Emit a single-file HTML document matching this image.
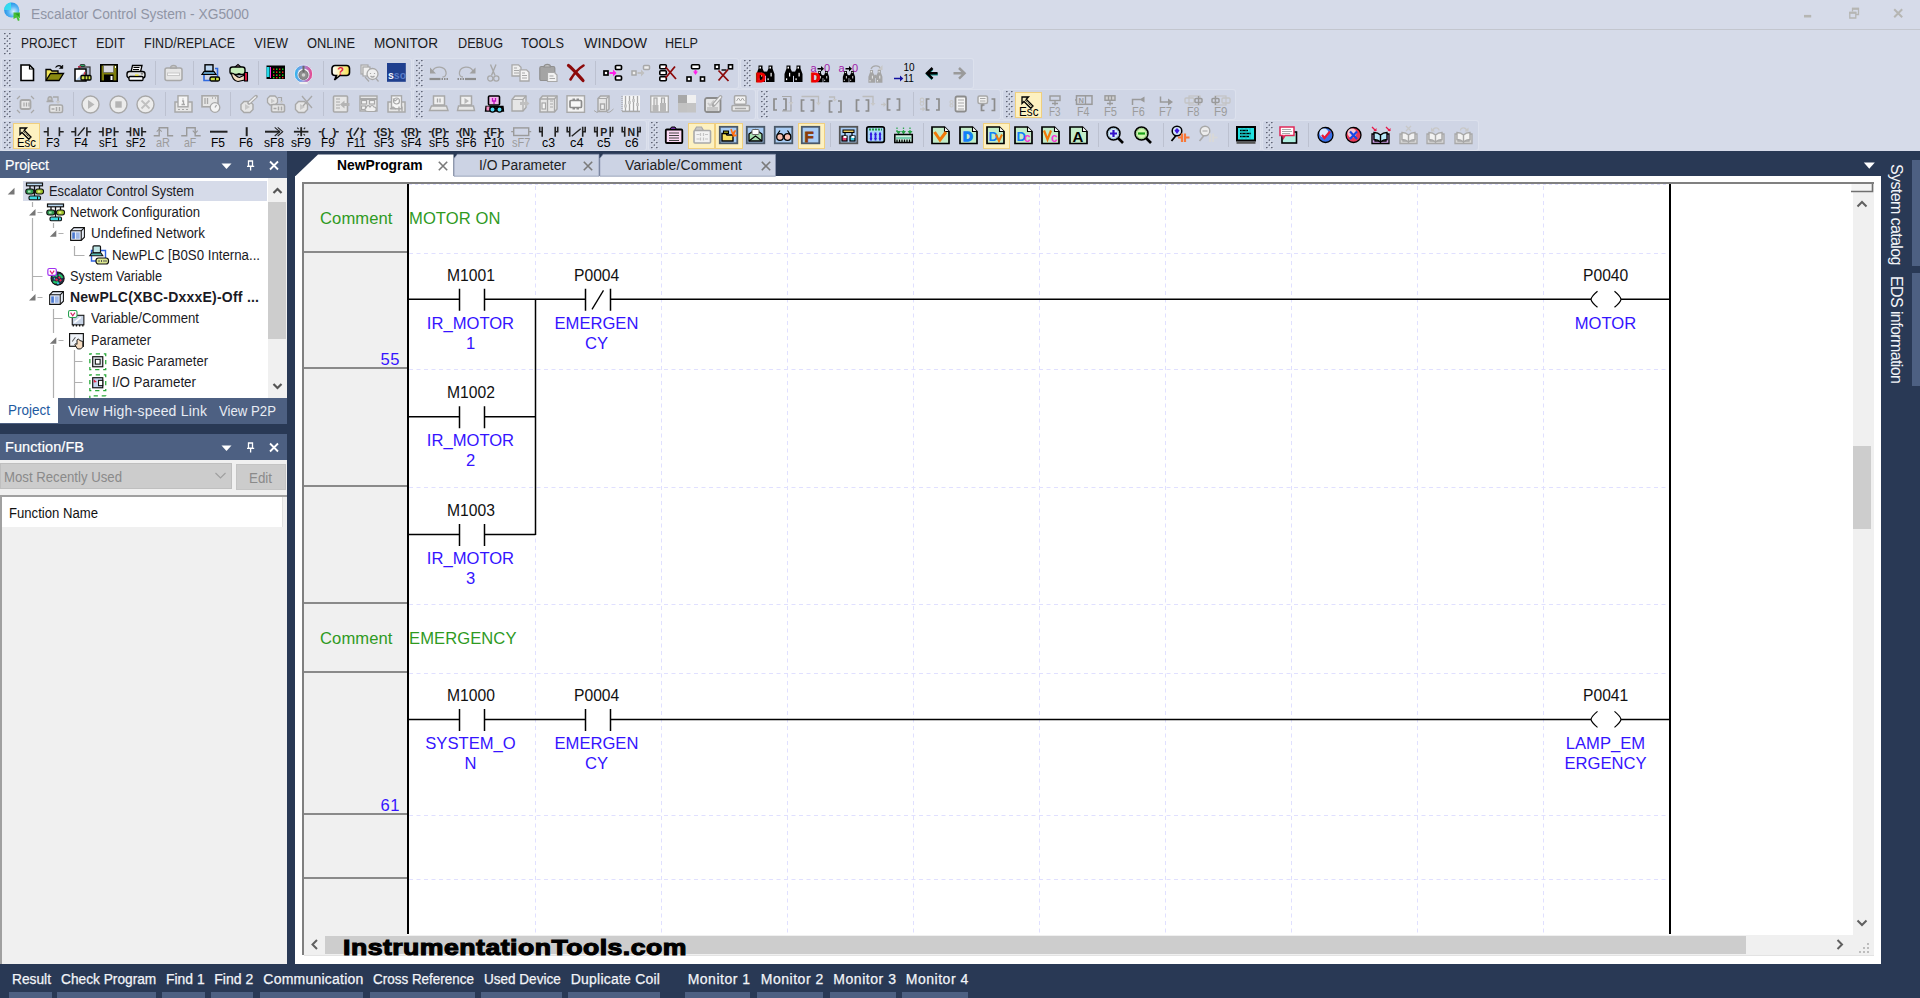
<!DOCTYPE html>
<html><head><meta charset="utf-8"><title>XG5000</title>
<style>
html,body{margin:0;padding:0;}
body{width:1920px;height:998px;overflow:hidden;background:#293955;position:relative;font-family:"Liberation Sans",sans-serif;}
.t{position:absolute;white-space:nowrap;}
.r{position:absolute;}
svg{position:absolute;overflow:visible;}
</style></head><body>
<div class="r" style="left:0px;top:0px;width:1920px;height:151px;background:#d6dbe9;"></div>
<div class="r" style="left:0px;top:29px;width:1920px;height:1px;background:#c3c6ce;"></div>
<span class="t" style="left:31.00px;top:7.15px;font-size:14px;line-height:14px;color:#9095a5;transform:scaleX(0.9831);transform-origin:0 0;">Escalator Control System - XG5000</span>
<svg style="left:2px;top:0px" width="22" height="24"><defs><radialGradient id="gl" cx=".62" cy=".6" r=".6"><stop offset="0" stop-color="#d8f0ff"/><stop offset=".55" stop-color="#58b4f4"/><stop offset="1" stop-color="#2494e8"/></radialGradient></defs><circle cx="9.700" cy="10" r="7.600" fill="url(#gl)"/><path d="M9 2.500v7.500h-7c.3-4 3-7 7-7.500z" fill="#34e4f0" opacity=".85"/><path d="M11.500 12.500h6.500v6l-1.800-1.800 1.500 3.500-1.700.8-1.600-3.500-2.900 1.500z" fill="#48c038"/><path d="M13 13.500h4v3z" fill="#2a9a2a"/></svg>
<svg style="left:1790px;top:0" width="130" height="28"><g stroke="#b6b6b3" fill="none"><path d="M14 16.200h7.200" stroke-width="2.600"/><path d="M62.500 11.500V8.500h6v6h-2.500" stroke-width="1.300"/><path d="M62 8.800h7" stroke-width="2"/><path d="M59.800 12.500h6v5.500h-6z" stroke-width="1.300"/><path d="M59.300 12.800h7" stroke-width="2"/><path d="M104.200 9.200l8 8M112.200 9.200l-8 8" stroke-width="2"/></g></svg>
<span class="t" style="left:21.00px;top:34.90px;font-size:15px;line-height:15px;color:#1b1b22;transform:scaleX(0.7999);transform-origin:0 0;">PROJECT</span>
<span class="t" style="left:96.00px;top:34.90px;font-size:15px;line-height:15px;color:#1b1b22;transform:scaleX(0.8488);transform-origin:0 0;">EDIT</span>
<span class="t" style="left:144.00px;top:34.90px;font-size:15px;line-height:15px;color:#1b1b22;transform:scaleX(0.8334);transform-origin:0 0;">FIND/REPLACE</span>
<span class="t" style="left:254.00px;top:34.90px;font-size:15px;line-height:15px;color:#1b1b22;transform:scaleX(0.8869);transform-origin:0 0;">VIEW</span>
<span class="t" style="left:307.00px;top:34.90px;font-size:15px;line-height:15px;color:#1b1b22;transform:scaleX(0.8595);transform-origin:0 0;">ONLINE</span>
<span class="t" style="left:374.00px;top:34.90px;font-size:15px;line-height:15px;color:#1b1b22;transform:scaleX(0.9071);transform-origin:0 0;">MONITOR</span>
<span class="t" style="left:458.00px;top:34.90px;font-size:15px;line-height:15px;color:#1b1b22;transform:scaleX(0.8436);transform-origin:0 0;">DEBUG</span>
<span class="t" style="left:521.00px;top:34.90px;font-size:15px;line-height:15px;color:#1b1b22;transform:scaleX(0.8502);transform-origin:0 0;">TOOLS</span>
<span class="t" style="left:584.00px;top:34.90px;font-size:15px;line-height:15px;color:#1b1b22;transform:scaleX(0.9572);transform-origin:0 0;">WINDOW</span>
<span class="t" style="left:665.00px;top:34.90px;font-size:15px;line-height:15px;color:#1b1b22;transform:scaleX(0.8422);transform-origin:0 0;">HELP</span>
<svg width="0" height="0"><defs><pattern id="gp" width="8" height="5" patternUnits="userSpaceOnUse"><rect x="0" y="0" width="1.600" height="1.200" fill="#5f6474"/><rect x="5" y="0" width="1.600" height="1.200" fill="#5f6474"/><rect x="2.700" y="2.300" width="1.200" height="1.600" fill="#5f6474"/><rect x="1.600" y="1.200" width="1" height="1" fill="#e8ebf3"/><rect x="6.600" y="1.200" width="1" height="1" fill="#e8ebf3"/><rect x="3.900" y="3.900" width="1" height="1" fill="#e8ebf3"/></pattern></defs></svg>
<div class="r" style="left:2px;top:59px;width:409px;height:29px;background:#cfd5e5;border-radius:2px;box-shadow:0 0 0 1px #dce1ed;"></div>
<div class="r" style="left:414px;top:59px;width:324px;height:29px;background:#cfd5e5;border-radius:2px;box-shadow:0 0 0 1px #dce1ed;"></div>
<div class="r" style="left:741px;top:59px;width:232px;height:29px;background:#cfd5e5;border-radius:2px;box-shadow:0 0 0 1px #dce1ed;"></div>
<div class="r" style="left:2px;top:90px;width:409px;height:29px;background:#cfd5e5;border-radius:2px;box-shadow:0 0 0 1px #dce1ed;"></div>
<div class="r" style="left:414px;top:90px;width:341px;height:29px;background:#cfd5e5;border-radius:2px;box-shadow:0 0 0 1px #dce1ed;"></div>
<div class="r" style="left:758px;top:90px;width:242px;height:29px;background:#cfd5e5;border-radius:2px;box-shadow:0 0 0 1px #dce1ed;"></div>
<div class="r" style="left:1003px;top:90px;width:232px;height:29px;background:#cfd5e5;border-radius:2px;box-shadow:0 0 0 1px #dce1ed;"></div>
<div class="r" style="left:2px;top:121px;width:644px;height:29px;background:#cfd5e5;border-radius:2px;box-shadow:0 0 0 1px #dce1ed;"></div>
<div class="r" style="left:649px;top:121px;width:611px;height:29px;background:#cfd5e5;border-radius:2px;box-shadow:0 0 0 1px #dce1ed;"></div>
<div class="r" style="left:1263px;top:121px;width:215px;height:29px;background:#cfd5e5;border-radius:2px;box-shadow:0 0 0 1px #dce1ed;"></div>
<svg style="left:4px;top:33px" width="8" height="22"><rect width="8" height="22" fill="url(#gp)"/></svg>
<svg style="left:4px;top:60px" width="8" height="27"><rect width="8" height="27" fill="url(#gp)"/></svg>
<svg style="left:416px;top:60px" width="8" height="27"><rect width="8" height="27" fill="url(#gp)"/></svg>
<svg style="left:744px;top:60px" width="8" height="27"><rect width="8" height="27" fill="url(#gp)"/></svg>
<svg style="left:4px;top:91px" width="8" height="27"><rect width="8" height="27" fill="url(#gp)"/></svg>
<svg style="left:416px;top:91px" width="8" height="27"><rect width="8" height="27" fill="url(#gp)"/></svg>
<svg style="left:761px;top:91px" width="8" height="27"><rect width="8" height="27" fill="url(#gp)"/></svg>
<svg style="left:1006px;top:91px" width="8" height="27"><rect width="8" height="27" fill="url(#gp)"/></svg>
<svg style="left:4px;top:122px" width="8" height="27"><rect width="8" height="27" fill="url(#gp)"/></svg>
<svg style="left:651px;top:122px" width="8" height="27"><rect width="8" height="27" fill="url(#gp)"/></svg>
<svg style="left:1266px;top:122px" width="8" height="27"><rect width="8" height="27" fill="url(#gp)"/></svg>
<div class="r" style="left:0px;top:151px;width:287px;height:27px;background:#4d6082;"></div>
<span class="t" style="left:5.00px;top:157.73px;font-size:14.5px;line-height:14.5px;color:#ffffff;transform:scaleX(0.9750);transform-origin:0 0;-webkit-text-stroke:0.2px #fff;">Project</span>
<svg style="left:218px;top:152px" width="70" height="26"><path d="M3.5 11.5h10l-5 5.5z" fill="#fff"/><g stroke="#fff" stroke-width="1.3" fill="none"><path d="M30.5 9h4v5.2h-4z M29 14.4h7.2 M32.6 14.4v4.2"/><path d="M52 9.5l8 8M60 9.5l-8 8" stroke-width="1.8"/></g></svg>
<div class="r" style="left:0px;top:178px;width:287px;height:220px;background:#ffffff;"></div>
<div class="r" style="left:268px;top:178px;width:19px;height:220px;background:#f0f0f0;"></div>
<div class="r" style="left:268px;top:201.5px;width:18px;height:137px;background:#cdcdcd;"></div>
<svg style="left:268px;top:178px" width="19" height="220"><g stroke="#555" stroke-width="2.200" fill="none"><path d="M5.500 15l4-4 4 4"/><path d="M5.500 206l4 4 4-4"/></g></svg>
<div class="r" style="left:23px;top:181px;width:244px;height:20px;background:#d6dbe9;"></div>
<div class="r" style="left:0px;top:398px;width:287px;height:26px;background:#4d6082;"></div>
<div class="r" style="left:0px;top:398px;width:58px;height:25px;background:#ffffff;"></div>
<span class="t" style="left:8.00px;top:403.15px;font-size:14px;line-height:14px;color:#1e5aa0;transform:scaleX(0.9639);transform-origin:0 0;">Project</span>
<span class="t" style="left:68.00px;top:404.15px;font-size:14px;line-height:14px;color:#e8ecf4;letter-spacing:0.202px;">View High-speed Link</span>
<span class="t" style="left:219.00px;top:404.15px;font-size:14px;line-height:14px;color:#e8ecf4;transform:scaleX(0.9430);transform-origin:0 0;">View P2P</span>
<div class="r" style="left:0px;top:433.5px;width:287px;height:27.5px;background:#4d6082;"></div>
<span class="t" style="left:5.00px;top:439.73px;font-size:14.5px;line-height:14.5px;color:#ffffff;letter-spacing:0.083px;-webkit-text-stroke:0.2px #fff;">Function/FB</span>
<svg style="left:218px;top:434px" width="70" height="26"><path d="M3.5 11.5h10l-5 5.5z" fill="#fff"/><g stroke="#fff" stroke-width="1.3" fill="none"><path d="M30.5 9h4v5.2h-4z M29 14.4h7.2 M32.6 14.4v4.2"/><path d="M52 9.5l8 8M60 9.5l-8 8" stroke-width="1.8"/></g></svg>
<div class="r" style="left:0px;top:460px;width:287px;height:504px;background:#f0f0f0;"></div>
<div class="r" style="left:0px;top:463px;width:232px;height:26px;background:#cccccc;border:1px solid #bfbfbf;box-sizing:border-box;"></div>
<span class="t" style="left:4.00px;top:469.65px;font-size:14px;line-height:14px;color:#8a8a8a;transform:scaleX(0.9420);transform-origin:0 0;">Most Recently Used</span>
<svg style="left:214px;top:470px" width="14" height="12"><path d="M1.5 3l5 5 5-5" stroke="#a0a0a0" stroke-width="1.2" fill="none"/></svg>
<div class="r" style="left:236px;top:464px;width:50px;height:26px;background:#cccccc;border:1px solid #c4c4c4;box-sizing:border-box;"></div>
<span class="t" style="left:249.00px;top:470.75px;font-size:14px;line-height:14px;color:#8a8a8a;transform:scaleX(0.9534);transform-origin:0 0;">Edit</span>
<div class="r" style="left:0px;top:495px;width:287px;height:2px;background:#a0a0a0;"></div>
<div class="r" style="left:0px;top:495px;width:2px;height:469px;background:#a0a0a0;"></div>
<div class="r" style="left:2px;top:497px;width:280px;height:30px;background:#ffffff;"></div>
<div class="r" style="left:282px;top:497px;width:1px;height:30px;background:#e0e0e0;"></div>
<span class="t" style="left:9.00px;top:505.95px;font-size:14px;line-height:14px;color:#111;transform:scaleX(0.9375);transform-origin:0 0;">Function Name</span>
<svg style="left:0;top:178px" width="268" height="220"><g stroke="#b0b0b0" stroke-width="1.200" fill="none"><path d="M32.500 24v5M32.500 40v73"/><path d="M53.500 45v5"/><path d="M37.500 34.500h5M58.500 55.500h5M74.500 68v9.500h10M32.500 98.500h10M37.500 119.500h5"/><path d="M53.500 131v24M53.500 167v53"/><path d="M53.500 140.500h9M58.500 162.500h5M74.500 172v48M74.500 183.500h8M74.500 204.500h8"/></g><g fill="#777"><path d="M14.500 9.800v6.800h-6.800z"/><path d="M35.500 31v6.500h-6.500z"/><path d="M56.300 52.200v6.500h-6.500z"/><path d="M35.500 116v6.500h-6.500z"/><path d="M56.300 159.200v6.500h-6.500z"/></g></svg>
<span class="t" style="left:49.00px;top:184.15px;font-size:14px;line-height:14px;color:#1a1a24;transform:scaleX(0.9181);transform-origin:0 0;">Escalator Control System</span>
<svg style="left:24.5px;top:182px" width="20" height="19"><rect x="1.500" y="1" width="16" height="2.800" fill="#b8d8f0" stroke="#111" stroke-width="1.200"/><path d="M5 4v3M14.500 4v3M9.500 4v10" stroke="#111" stroke-width="1.300"/><rect x=".8" y="7" width="8" height="5" rx="2.200" fill="#2f9a50" stroke="#111" stroke-width="1.100"/><rect x="3" y="8.500" width="2.600" height="2" fill="#a8e4b4"/><rect x="10.500" y="7" width="8" height="5" rx="2.200" fill="#9cc02c" stroke="#111" stroke-width="1.100"/><rect x="12.800" y="8.500" width="2.600" height="2" fill="#ecf488"/><rect x="4" y="14" width="11.500" height="3.800" rx="1.300" fill="#40d8e0" stroke="#111" stroke-width="1.100"/><path d="M12.500 14.500v3" stroke="#111" stroke-width="1"/></svg>
<span class="t" style="left:70.00px;top:205.15px;font-size:14px;line-height:14px;color:#1a1a24;transform:scaleX(0.9386);transform-origin:0 0;">Network Configuration</span>
<svg style="left:45.5px;top:203px" width="20" height="19"><rect x="1.500" y="1" width="16" height="2.800" fill="#b8d8f0" stroke="#111" stroke-width="1.200"/><path d="M5 4v3M14.500 4v3M9.500 4v10" stroke="#111" stroke-width="1.300"/><rect x=".8" y="7" width="8" height="5" rx="2.200" fill="#2f9a50" stroke="#111" stroke-width="1.100"/><rect x="3" y="8.500" width="2.600" height="2" fill="#a8e4b4"/><rect x="10.500" y="7" width="8" height="5" rx="2.200" fill="#9cc02c" stroke="#111" stroke-width="1.100"/><rect x="12.800" y="8.500" width="2.600" height="2" fill="#ecf488"/><rect x="4" y="14" width="11.500" height="3.800" rx="1.300" fill="#40d8e0" stroke="#111" stroke-width="1.100"/><path d="M12.500 14.500v3" stroke="#111" stroke-width="1"/></svg>
<span class="t" style="left:91.00px;top:226.15px;font-size:14px;line-height:14px;color:#1a1a24;transform:scaleX(0.9575);transform-origin:0 0;">Undefined Network</span>
<svg style="left:68px;top:224.5px" width="18" height="18" viewBox="0 0 17 17"><path d="M2.5 5.5l3-3h10v9l-3 3h-10z" fill="#e8eef8" stroke="#111" stroke-width="1"/><path d="M2.5 5.5h10v9M12.5 5.5l3-3" stroke="#111" stroke-width="1" fill="none"/><rect x="4" y="7" width="2.5" height="6" fill="#4a78d0"/><rect x="7.5" y="7" width="3.5" height="6" fill="#9fb8e8"/></svg>
<span class="t" style="left:112.00px;top:248.15px;font-size:14px;line-height:14px;color:#1a1a24;transform:scaleX(0.9462);transform-origin:0 0;">NewPLC [B0S0 Interna...</span>
<svg style="left:88.5px;top:245px" width="21" height="21"><path d="M2.500 5.500h14v10.500h-14z" stroke="#2f62e0" stroke-width="1.400" fill="none"/><rect x="4" y=".8" width="7.500" height="7" rx="1" fill="#bfe6e6" stroke="#111" stroke-width="1.200"/><path d="M.8 10.800h13l-1.800-2.800h-9.400z" fill="#58b8b0" stroke="#111" stroke-width="1.100"/><rect x="7" y="13" width="12.500" height="6" rx="2.500" fill="#dce890" stroke="#111" stroke-width="1.200"/><path d="M10 15v2M12.500 15v2M15 15v2M17 15v2" stroke="#555" stroke-width="1"/></svg>
<span class="t" style="left:70.00px;top:269.15px;font-size:14px;line-height:14px;color:#1a1a24;transform:scaleX(0.9119);transform-origin:0 0;">System Variable</span>
<svg style="left:47px;top:267.5px" width="18" height="18" viewBox="0 0 17 17"><circle cx="10" cy="10" r="6.200" fill="#203048" stroke="#111" stroke-width="1"/><path d="M5.500 8c1.500-2 3-1 4 0M11 6.500c2 0 3 1.500 3.500 3M6 12.500c1.500 1.500 3 1.500 4.500.5" stroke="#20c868" stroke-width="1.800" fill="none"/><path d="M8 10.500l2 1M12 12.500l1.500-1.500M12.500 8.500l-1.500 1" stroke="#e82850" stroke-width="1.700" fill="none"/><path d="M9.500 14.500h2M6.500 10h1" stroke="#38c8e8" stroke-width="1.500"/><rect x=".8" y=".5" width="8" height="6.500" rx="1.500" fill="#fff" stroke="#a030f0" stroke-width="1.100"/><path d="M2.800 2.500l2 3 2-3" stroke="#e02080" stroke-width="1.100" fill="none"/></svg>
<span class="t" style="left:70.00px;top:290.15px;font-size:14px;line-height:14px;color:#1a1a24;font-weight:bold;letter-spacing:0.226px;">NewPLC(XBC-DxxxE)-Off ...</span>
<svg style="left:47px;top:288.5px" width="18" height="18" viewBox="0 0 17 17"><path d="M2.5 5.5l3-3h10v9l-3 3h-10z" fill="#e8eef8" stroke="#111" stroke-width="1"/><path d="M2.5 5.5h10v9M12.5 5.5l3-3" stroke="#111" stroke-width="1" fill="none"/><rect x="4" y="7" width="2.5" height="6" fill="#4a78d0"/><rect x="7.5" y="7" width="3.5" height="6" fill="#9fb8e8"/></svg>
<span class="t" style="left:91.00px;top:311.15px;font-size:14px;line-height:14px;color:#1a1a24;transform:scaleX(0.9400);transform-origin:0 0;">Variable/Comment</span>
<svg style="left:68px;top:309.5px" width="18" height="18" viewBox="0 0 17 17"><rect x="4" y="5" width="11" height="9" fill="#c8d4e6" stroke="#111" stroke-width="1"/><path d="M5 15.5v-1.5M8 15.5v-1.5M11 15.5v-1.5M14 15.5v-1.5" stroke="#111" stroke-width="1.2"/><path d="M6 12l6-5" stroke="#fff" stroke-width="1.5"/><rect x="0.5" y="0.5" width="8" height="6.5" rx="1.5" fill="#fff" stroke="#28a050" stroke-width="1"/><path d="M2.5 2.5l2 3 2-3" stroke="#d02060" stroke-width="1" fill="none"/></svg>
<span class="t" style="left:91.00px;top:333.15px;font-size:14px;line-height:14px;color:#1a1a24;transform:scaleX(0.9180);transform-origin:0 0;">Parameter</span>
<svg style="left:68px;top:331.5px" width="18" height="18" viewBox="0 0 17 17"><rect x="1.5" y="1.5" width="13" height="12" fill="#eef2f8" stroke="#111" stroke-width="1.1"/><path d="M4 9l3-4" stroke="#555" stroke-width="1"/><path d="M8.5 7.5c1-1.5 2.5-.5 2.5.5l3 1v5l-2 2h-3l-2.5-4c0-1 1-1.2 2-.3z" fill="#f6dcc0" stroke="#111" stroke-width=".9"/></svg>
<span class="t" style="left:112.00px;top:354.15px;font-size:14px;line-height:14px;color:#1a1a24;transform:scaleX(0.9277);transform-origin:0 0;">Basic Parameter</span>
<svg style="left:89px;top:352.5px" width="18" height="18" viewBox="0 0 17 17"><rect x="0.8" y="0.8" width="15" height="15" fill="none" stroke="#28a838" stroke-width="1.2" stroke-dasharray="4 3.6" stroke-dashoffset="2"/><rect x="3.5" y="3.5" width="9.5" height="9.5" fill="#dfe4ea" stroke="#111" stroke-width="1.1"/><rect x="6" y="6" width="4.5" height="4.5" fill="#fff" stroke="#111" stroke-width="1"/></svg>
<span class="t" style="left:112.00px;top:375.15px;font-size:14px;line-height:14px;color:#1a1a24;transform:scaleX(0.9555);transform-origin:0 0;">I/O Parameter</span>
<svg style="left:89px;top:373.5px" width="18" height="18" viewBox="0 0 17 17"><rect x="0.8" y="0.8" width="15" height="15" fill="none" stroke="#28a838" stroke-width="1.2" stroke-dasharray="4 3.6" stroke-dashoffset="2"/><rect x="3.5" y="3.5" width="9.5" height="9.5" fill="#c8d4ee" stroke="#111" stroke-width="1.1"/><rect x="9" y="6" width="4" height="5" fill="#fff" stroke="#111" stroke-width="1"/><path d="M4.5 5l3 2.5-3 .5z" fill="#e02040"/></svg>
<svg style="left:89px;top:395px" width="18" height="3" viewBox="0 0 17 2.8"><path d="M0.800 2.800v-2h15v2" fill="none" stroke="#28a838" stroke-width="1.2" stroke-dasharray="4 3.600" stroke-dashoffset="2"/></svg>
<div class="r" style="left:295px;top:176px;width:1586px;height:788px;background:#ffffff;"></div>
<svg style="left:295px;top:152px" width="1590" height="26"><path d="M0 26V24.500L23 2.500H158.500V26z" fill="#fff"/><path d="M159 24.200V6.500l3.300-4.200H304V24.200z" fill="#ccd3e4" stroke="#8b96b0" stroke-width=".8"/><path d="M304.800 24.200V6.500l3.300-4.200H480.500V24.200z" fill="#ccd3e4" stroke="#8b96b0" stroke-width=".8"/><g stroke="#7a7a7a" stroke-width="1.600" fill="none"><path d="M143.800 9.800l8.400 8.400M152.200 9.800l-8.400 8.400"/><path d="M288.800 9.800l8.400 8.400M297.200 9.800l-8.400 8.400"/><path d="M466.800 9.800l8.400 8.400M475.200 9.800l-8.400 8.400"/></g><path d="M1568.800 10.400h11l-5.500 6.300z" fill="#fff"/></svg>
<span class="t" style="left:336.50px;top:157.75px;font-size:14px;line-height:14px;color:#000;font-weight:bold;transform:scaleX(0.9901);transform-origin:0 0;">NewProgram</span>
<span class="t" style="left:479.00px;top:157.75px;font-size:14px;line-height:14px;color:#1e1e1e;transform:scaleX(0.9896);transform-origin:0 0;">I/O Parameter</span>
<span class="t" style="left:625.00px;top:157.75px;font-size:14px;line-height:14px;color:#1e1e1e;letter-spacing:0.140px;">Variable/Comment</span>
<div class="r" style="left:302px;top:182px;width:1572px;height:2px;background:#808080;"></div>
<div class="r" style="left:302px;top:182px;width:2px;height:773px;background:#808080;"></div>
<div class="r" style="left:304px;top:955px;width:1570px;height:1px;background:#e3e3e3;"></div>
<div class="r" style="left:304px;top:184px;width:103px;height:751px;background:#f0f0f0;"></div>
<div class="r" style="left:406.5px;top:184px;width:2px;height:750px;background:#000;"></div>
<div class="r" style="left:1669px;top:184px;width:2px;height:750px;background:#000;"></div>
<div class="r" style="left:1852.5px;top:184px;width:21.5px;height:751px;background:#f0f0f0;"></div>
<div class="r" style="left:304px;top:935px;width:1570px;height:20px;background:#f0f0f0;"></div>
<div class="r" style="left:1852.5px;top:446px;width:18.5px;height:83px;background:#cdcdcd;"></div>
<div class="r" style="left:325px;top:936px;width:1421px;height:18px;background:#cdcdcd;"></div>
<svg style="left:1850px;top:182px" width="26" height="775"><rect x="1.500" y="2" width="20.500" height="8" fill="#f4f4f4"/><path d="M1 9.500h21.500V2" stroke="#707070" stroke-width="1.600" fill="none"/><g stroke="#606060" stroke-width="2" fill="none"><path d="M7.500 24.500l4.500-4.500 4.500 4.500"/><path d="M7.500 738.500l4.500 4.500 4.500-4.500"/></g><g fill="#bdbdbd"><rect x="17" y="761" width="2" height="2"/><rect x="17" y="765" width="2" height="2"/><rect x="13" y="765" width="2" height="2"/><rect x="17" y="769" width="2" height="2"/><rect x="13" y="769" width="2" height="2"/><rect x="9" y="769" width="2" height="2"/></g></svg>
<svg style="left:304px;top:935px" width="1550" height="20"><g stroke="#606060" stroke-width="2" fill="none"><path d="M13 5l-4.500 4.500 4.500 4.500"/><path d="M1533.500 5l4.500 4.500-4.500 4.500"/></g></svg>
<span class="t" style="left:342.5px;top:936.58px;font-size:22px;line-height:22px;color:#000;font-weight:bold;-webkit-text-stroke:1.1px #000;letter-spacing:0.4px;transform:scaleX(1.2101);transform-origin:0 0;">InstrumentationTools.com</span>
<svg style="left:0;top:0" width="1920" height="998"><rect x="304" y="251" width="103" height="2" fill="#8a8a8a"/><rect x="304" y="367" width="103" height="2" fill="#8a8a8a"/><rect x="304" y="485" width="103" height="2" fill="#8a8a8a"/><rect x="304" y="602" width="103" height="2" fill="#8a8a8a"/><rect x="304" y="671" width="103" height="2" fill="#8a8a8a"/><rect x="304" y="813" width="103" height="2" fill="#8a8a8a"/><rect x="304" y="877" width="103" height="2" fill="#8a8a8a"/><g stroke="#e0e0ff" stroke-width="1" stroke-dasharray="4 3.500" fill="none"><path d="M409 184.500H1668" stroke-dasharray="3 3"/><path d="M409 253.5H1668"/><path d="M409 369.5H1668"/><path d="M409 487.5H1668"/><path d="M409 604.5H1668"/><path d="M409 673.5H1668"/><path d="M409 815.5H1668"/><path d="M409 879.5H1668"/><path d="M535.5 186V934"/><path d="M661.5 186V934"/><path d="M787.5 186V934"/><path d="M913.5 186V934"/><path d="M1039.5 186V934"/><path d="M1165.5 186V934"/><path d="M1291.5 186V934"/><path d="M1417.5 186V934"/><path d="M1543.5 186V934"/></g><path d="M409 299.3H459.5M484.5 299.3H585.5M610.5 299.3H1591M1621 299.3H1669" stroke="#000" stroke-width="1.5" fill="none"/><path d="M409 416.8H459.5M484.5 416.8H535.500M409 534.4H459.5M484.5 534.4H535.500M535.500 299.3V535.1" stroke="#000" stroke-width="1.5" fill="none"/><path d="M409 719.4H459.5M484.5 719.4H585.5M610.5 719.4H1591M1621 719.4H1669" stroke="#000" stroke-width="1.5" fill="none"/><path d="M459.5 288.8V310.8M484.5 288.8V310.8" stroke="#000" stroke-width="1.5" fill="none"/><path d="M585.5 288.8V310.8M610.5 288.8V310.8" stroke="#000" stroke-width="1.5" fill="none"/><path d="M592 309.3L603.5 290.3" stroke="#000" stroke-width="1.300" fill="none"/><path d="M459.5 406.3V428.3M484.5 406.3V428.3" stroke="#000" stroke-width="1.5" fill="none"/><path d="M459.5 523.9V545.9M484.5 523.9V545.9" stroke="#000" stroke-width="1.5" fill="none"/><path d="M459.5 708.9V730.9M484.5 708.9V730.9" stroke="#000" stroke-width="1.5" fill="none"/><path d="M585.5 708.9V730.9M610.5 708.9V730.9" stroke="#000" stroke-width="1.5" fill="none"/><path d="M1597.5 291.3Q1591.5 296.3 1591 299.3Q1591.5 302.3 1597.5 307.3" stroke="#000" stroke-width="1.200" fill="none"/><path d="M1614.5 291.3Q1620.5 296.3 1621 299.3Q1620.5 302.3 1614.5 307.3" stroke="#000" stroke-width="1.200" fill="none"/><path d="M1597.5 711.4Q1591.5 716.4 1591 719.4Q1591.5 722.4 1597.5 727.4" stroke="#000" stroke-width="1.200" fill="none"/><path d="M1614.5 711.4Q1620.5 716.4 1621 719.4Q1620.5 722.4 1614.5 727.4" stroke="#000" stroke-width="1.200" fill="none"/></svg>
<span class="t" style="left:446.54px;top:267.95px;font-size:16.6px;line-height:16.6px;color:#111;transform:scaleX(0.9441);transform-origin:0 0;">M1001</span>
<span class="t" style="left:426.84px;top:315.65px;font-size:16.6px;line-height:16.6px;color:#3514ff;">IR_MOTOR</span>
<span class="t" style="left:465.88px;top:335.65px;font-size:16.6px;line-height:16.6px;color:#3514ff;">1</span>
<span class="t" style="left:573.87px;top:267.95px;font-size:16.6px;line-height:16.6px;color:#111;transform:scaleX(0.9430);transform-origin:0 0;">P0004</span>
<span class="t" style="left:554.53px;top:315.65px;font-size:16.6px;line-height:16.6px;color:#3514ff;">EMERGEN</span>
<span class="t" style="left:584.97px;top:335.65px;font-size:16.6px;line-height:16.6px;color:#3514ff;">CY</span>
<span class="t" style="left:1582.87px;top:267.95px;font-size:16.6px;line-height:16.6px;color:#111;transform:scaleX(0.9430);transform-origin:0 0;">P0040</span>
<span class="t" style="left:1574.76px;top:315.65px;font-size:16.6px;line-height:16.6px;color:#3514ff;">MOTOR</span>
<span class="t" style="left:446.54px;top:385.45px;font-size:16.6px;line-height:16.6px;color:#111;transform:scaleX(0.9441);transform-origin:0 0;">M1002</span>
<span class="t" style="left:426.84px;top:433.15px;font-size:16.6px;line-height:16.6px;color:#3514ff;">IR_MOTOR</span>
<span class="t" style="left:465.88px;top:453.15px;font-size:16.6px;line-height:16.6px;color:#3514ff;">2</span>
<span class="t" style="left:446.54px;top:502.95px;font-size:16.6px;line-height:16.6px;color:#111;transform:scaleX(0.9441);transform-origin:0 0;">M1003</span>
<span class="t" style="left:426.84px;top:550.65px;font-size:16.6px;line-height:16.6px;color:#3514ff;">IR_MOTOR</span>
<span class="t" style="left:465.88px;top:570.65px;font-size:16.6px;line-height:16.6px;color:#3514ff;">3</span>
<span class="t" style="left:446.54px;top:687.95px;font-size:16.6px;line-height:16.6px;color:#111;transform:scaleX(0.9441);transform-origin:0 0;">M1000</span>
<span class="t" style="left:425.30px;top:735.65px;font-size:16.6px;line-height:16.6px;color:#3514ff;">SYSTEM_O</span>
<span class="t" style="left:464.51px;top:755.65px;font-size:16.6px;line-height:16.6px;color:#3514ff;">N</span>
<span class="t" style="left:573.87px;top:687.95px;font-size:16.6px;line-height:16.6px;color:#111;transform:scaleX(0.9430);transform-origin:0 0;">P0004</span>
<span class="t" style="left:554.53px;top:735.65px;font-size:16.6px;line-height:16.6px;color:#3514ff;">EMERGEN</span>
<span class="t" style="left:584.97px;top:755.65px;font-size:16.6px;line-height:16.6px;color:#3514ff;">CY</span>
<span class="t" style="left:1582.87px;top:687.95px;font-size:16.6px;line-height:16.6px;color:#111;transform:scaleX(0.9430);transform-origin:0 0;">P0041</span>
<span class="t" style="left:1565.83px;top:735.65px;font-size:16.6px;line-height:16.6px;color:#3514ff;">LAMP_EM</span>
<span class="t" style="left:1564.45px;top:755.65px;font-size:16.6px;line-height:16.6px;color:#3514ff;">ERGENCY</span>
<span class="t" style="left:320.00px;top:210.55px;font-size:16.6px;line-height:16.6px;color:#2f9a1f;letter-spacing:0.091px;">Comment</span>
<span class="t" style="left:409.00px;top:210.55px;font-size:16.6px;line-height:16.6px;color:#2f9a1f;letter-spacing:0.072px;">MOTOR ON</span>
<span class="t" style="left:320.00px;top:630.55px;font-size:16.6px;line-height:16.6px;color:#2f9a1f;letter-spacing:0.091px;">Comment</span>
<span class="t" style="left:409.00px;top:630.55px;font-size:16.6px;line-height:16.6px;color:#2f9a1f;letter-spacing:0.064px;">EMERGENCY</span>
<span class="t" style="left:380.60px;top:351.75px;font-size:16.6px;line-height:16.6px;color:#3514ff;letter-spacing:0.534px;">55</span>
<span class="t" style="left:380.60px;top:797.55px;font-size:16.6px;line-height:16.6px;color:#3514ff;letter-spacing:0.534px;">61</span>
<span class="t" style="left:11.70px;top:971.75px;font-size:14px;line-height:14px;color:#f2f4f8;transform:scaleX(0.9828);transform-origin:0 0;-webkit-text-stroke:0.25px #f2f4f8;">Result</span>
<div class="r" style="left:9px;top:992px;width:42.7px;height:6px;background:#4d6082;"></div>
<span class="t" style="left:60.70px;top:971.75px;font-size:14px;line-height:14px;color:#f2f4f8;transform:scaleX(0.9799);transform-origin:0 0;-webkit-text-stroke:0.25px #f2f4f8;">Check Program</span>
<div class="r" style="left:57.3px;top:992px;width:98.7px;height:6px;background:#4d6082;"></div>
<span class="t" style="left:165.70px;top:971.75px;font-size:14px;line-height:14px;color:#f2f4f8;transform:scaleX(0.9920);transform-origin:0 0;-webkit-text-stroke:0.25px #f2f4f8;">Find 1</span>
<div class="r" style="left:162.3px;top:992px;width:42.69999999999999px;height:6px;background:#4d6082;"></div>
<span class="t" style="left:214.30px;top:971.75px;font-size:14px;line-height:14px;color:#f2f4f8;letter-spacing:0.018px;-webkit-text-stroke:0.25px #f2f4f8;">Find 2</span>
<div class="r" style="left:211px;top:992px;width:42.30000000000001px;height:6px;background:#4d6082;"></div>
<span class="t" style="left:263.30px;top:971.75px;font-size:14px;line-height:14px;color:#f2f4f8;letter-spacing:0.228px;-webkit-text-stroke:0.25px #f2f4f8;">Communication</span>
<div class="r" style="left:260px;top:992px;width:103.30000000000001px;height:6px;background:#4d6082;"></div>
<span class="t" style="left:373.30px;top:971.75px;font-size:14px;line-height:14px;color:#f2f4f8;transform:scaleX(0.9615);transform-origin:0 0;-webkit-text-stroke:0.25px #f2f4f8;">Cross Reference</span>
<div class="r" style="left:370px;top:992px;width:105px;height:6px;background:#4d6082;"></div>
<span class="t" style="left:484.00px;top:971.75px;font-size:14px;line-height:14px;color:#f2f4f8;transform:scaleX(0.9664);transform-origin:0 0;-webkit-text-stroke:0.25px #f2f4f8;">Used Device</span>
<div class="r" style="left:481px;top:992px;width:80.70000000000005px;height:6px;background:#4d6082;"></div>
<span class="t" style="left:570.70px;top:971.75px;font-size:14px;line-height:14px;color:#f2f4f8;letter-spacing:0.225px;-webkit-text-stroke:0.25px #f2f4f8;">Duplicate Coil</span>
<div class="r" style="left:567.5px;top:992px;width:92.5px;height:6px;background:#4d6082;"></div>
<span class="t" style="left:687.70px;top:971.75px;font-size:14px;line-height:14px;color:#f2f4f8;letter-spacing:0.493px;-webkit-text-stroke:0.25px #f2f4f8;">Monitor 1</span>
<div class="r" style="left:685px;top:992px;width:65px;height:6px;background:#4d6082;"></div>
<span class="t" style="left:760.70px;top:971.75px;font-size:14px;line-height:14px;color:#f2f4f8;letter-spacing:0.530px;-webkit-text-stroke:0.25px #f2f4f8;">Monitor 2</span>
<div class="r" style="left:757.3px;top:992px;width:66.0px;height:6px;background:#4d6082;"></div>
<span class="t" style="left:833.30px;top:971.75px;font-size:14px;line-height:14px;color:#f2f4f8;letter-spacing:0.543px;-webkit-text-stroke:0.25px #f2f4f8;">Monitor 3</span>
<div class="r" style="left:830px;top:992px;width:66px;height:6px;background:#4d6082;"></div>
<span class="t" style="left:905.70px;top:971.75px;font-size:14px;line-height:14px;color:#f2f4f8;letter-spacing:0.530px;-webkit-text-stroke:0.25px #f2f4f8;">Monitor 4</span>
<div class="r" style="left:902.3px;top:992px;width:66.0px;height:6px;background:#4d6082;"></div>
<div class="r" style="left:1912px;top:160px;width:8px;height:106px;background:#4d6082;"></div>
<div class="r" style="left:1912px;top:273px;width:8px;height:113px;background:#4d6082;"></div>
<span class="t" style="left:1904.34px;top:163.50px;font-size:16px;line-height:16px;color:#f2f4f8;letter-spacing:-0.606px;transform:rotate(90deg);transform-origin:0 0;">System catalog</span>
<span class="t" style="left:1904.34px;top:276.40px;font-size:16px;line-height:16px;color:#f2f4f8;letter-spacing:-0.607px;transform:rotate(90deg);transform-origin:0 0;">EDS information</span>
<svg style="left:20px;top:63.5px" width="22" height="20"><path d="M1 1h8.500l4 4v11.500h-12.500z" stroke="#000" stroke-width="1.6" fill="#fff" /><path d="M9.500 1v4h4" stroke="#000" stroke-width="1.2" fill="none" /></svg>
<svg style="left:45px;top:63.5px" width="22" height="20"><path d="M1 16V5.500h4.500l1.500 1.500h6v3" stroke="#000" stroke-width="1.3" fill="#f4e85a" /><path d="M1 16.500l4.500-7h13l-4.500 7z" stroke="#000" stroke-width="1.3" fill="#8a8a10" /><path d="M10.500 3.500c2-2.500 5-2.500 6.500 0" stroke="#000" stroke-width="1.1" fill="none" /><path d="M17.800 1v3.500h-3.500z" stroke="#000" stroke-width="0.5" fill="#000" /></svg>
<svg style="left:73.5px;top:63.5px" width="22" height="20"><rect x="5" y="3" width="11" height="10" fill="#aebcd2" stroke="#333" stroke-width="1.2" rx="0"/><rect x="6" y="0.5" width="5" height="2" fill="#2fa866" stroke="#222" stroke-width="0.8" rx="1"/><rect x="4" y="2" width="3" height="1.5" fill="#c03050" stroke="none" stroke-width="0" rx="0"/><rect x="1" y="5" width="11" height="12" fill="#fff" stroke="#000" stroke-width="1.5" rx="0"/><path d="M2 16l9-9v9z" stroke="none" stroke-width="0" fill="#b8d0ec" /><path d="M8 16l3-8" stroke=" #e03040" stroke-width="1.2" fill="none" /><rect x="7" y="11.5" width="10" height="4.5" fill="#cce048" stroke="#000" stroke-width="1.3" rx="1"/><path d="M11 11.500v4.500M14 11.500v4.500" stroke="#000" stroke-width="1.2" fill="none" /></svg>
<svg style="left:100px;top:63.5px" width="22" height="20"><rect x="0.8" y="0.8" width="16.4" height="16.4" fill="#7e7e0c" stroke="#000" stroke-width="1.6" rx="0"/><rect x="3.5" y="1.5" width="10" height="7" fill="#dadae2" stroke="#555" stroke-width="0.6" rx="0"/><rect x="4" y="10.5" width="9.5" height="6.5" fill="#000" stroke="none" stroke-width="0" rx="0"/><rect x="10.5" y="12" width="2" height="4" fill="#fff" stroke="none" stroke-width="0" rx="0"/><rect x="15" y="2" width="1" height="2" fill="#fff" stroke="none" stroke-width="0" rx="0"/></svg>
<svg style="left:126px;top:63.5px" width="22" height="20"><path d="M5 8l1.500-6.500h9.500l-1.500 6.500" stroke="#000" stroke-width="1.3" fill="#fff" /><path d="M7.500 3.500h6M7 5.500h6" stroke="#000" stroke-width="1" fill="none" /><rect x="1" y="7.5" width="18" height="6.5" fill="#e4e4e4" stroke="#000" stroke-width="1.4" rx="2.5"/><rect x="3" y="12.5" width="14" height="4" fill="#fff" stroke="#000" stroke-width="1.3" rx="1"/><rect x="9" y="10.5" width="3.5" height="1.3" fill="#e8dc20" stroke="none" stroke-width="0" rx="0"/><circle cx="16" cy="9.5" r="1.2" fill="#888" stroke="none" stroke-width="0"/></svg>
<div class="r" style="left:154.9px;top:60.5px;width:1px;height:24px;background:#bcc1d0;"></div>
<svg style="left:164.4px;top:63.5px" width="22" height="20"><rect x="1" y="4" width="17" height="12.5" fill="#e6e6e6" stroke="#a8a8a8" stroke-width="1.5" rx="2"/><path d="M6.500 4c0-3.500 6-3.500 6 0z" stroke="#a8a8a8" stroke-width="1.3" fill="#c8c8c8" /><rect x="3.5" y="9" width="12" height="2.5" fill="#f8f8f8" stroke="#c8c8c8" stroke-width="1" rx="0"/></svg>
<div class="r" style="left:192.5px;top:60.5px;width:1px;height:24px;background:#bcc1d0;"></div>
<svg style="left:201px;top:63.5px" width="22" height="20"><path d="M3 11v5.500h8M14 4.500h2.500v8" stroke="#2f6ae0" stroke-width="1.6" fill="none" /><rect x="4" y="0.8" width="8" height="6.5" fill="#bcd6f0" stroke="#000" stroke-width="1.4" rx="0"/><path d="M1 10.500h14l-2-3h-10z" stroke="#000" stroke-width="1.2" fill="#5c94b8" /><rect x="9" y="13" width="9.5" height="4" fill="#cce048" stroke="#000" stroke-width="1.3" rx="1.5"/><path d="M14.500 13.500v3" stroke="#000" stroke-width="1.2" fill="none" /></svg>
<svg style="left:228.7px;top:63.5px" width="22" height="20"><path d="M5.500 3.500l3.500-3 3.500 3z" stroke="#000" stroke-width="1.1" fill="#e8a0c4" /><rect x="1" y="3" width="15" height="7.5" fill="#c6ecba" stroke="#000" stroke-width="1.4" rx="2.5"/><path d="M2.500 9c3 0 5 4.500 8 4.500l5-2.500v5l-6.500 1.500c-3.500 0-6.500-4-6.500-8.500z" stroke="#000" stroke-width="1.2" fill="#f2dcc0" /><path d="M8 11c1-2 3-2 4 0" stroke="#000" stroke-width="1.1" fill="none" /><rect x="15.5" y="8.5" width="3" height="8.5" fill="#e01840" stroke="#000" stroke-width="1.1" rx="0"/></svg>
<div class="r" style="left:257.5px;top:60.5px;width:1px;height:24px;background:#bcc1d0;"></div>
<svg style="left:266px;top:63.5px" width="22" height="20"><rect x="0.5" y="1.5" width="18.5" height="13.5" fill="#000" stroke="none" stroke-width="0" rx="0"/><rect x="0.5" y="3" width="3" height="10" fill="#20d8e8" stroke="none" stroke-width="0" rx="0"/><rect x="4" y="3" width="1" height="11" fill="#ff30e0" stroke="none" stroke-width="0" rx="0"/><rect x="7" y="4.5" width="1.4" height="1.4" fill="#ff2020" stroke="none" stroke-width="0" rx="0"/><rect x="7" y="7.5" width="1.4" height="1.4" fill="#20e020" stroke="none" stroke-width="0" rx="0"/><rect x="7" y="10.5" width="1.4" height="1.4" fill="#ff2020" stroke="none" stroke-width="0" rx="0"/><rect x="7" y="13" width="1.4" height="1.4" fill="#20e020" stroke="none" stroke-width="0" rx="0"/><rect x="10" y="4.5" width="1.4" height="1.4" fill="#20e020" stroke="none" stroke-width="0" rx="0"/><rect x="10" y="7.5" width="1.4" height="1.4" fill="#ff2020" stroke="none" stroke-width="0" rx="0"/><rect x="10" y="10.5" width="1.4" height="1.4" fill="#20e020" stroke="none" stroke-width="0" rx="0"/><rect x="10" y="13" width="1.4" height="1.4" fill="#ff2020" stroke="none" stroke-width="0" rx="0"/><rect x="13" y="4.5" width="1.4" height="1.4" fill="#ff2020" stroke="none" stroke-width="0" rx="0"/><rect x="13" y="7.5" width="1.4" height="1.4" fill="#20e020" stroke="none" stroke-width="0" rx="0"/><rect x="13" y="10.5" width="1.4" height="1.4" fill="#ff2020" stroke="none" stroke-width="0" rx="0"/><rect x="13" y="13" width="1.4" height="1.4" fill="#20e020" stroke="none" stroke-width="0" rx="0"/><rect x="16" y="4.5" width="1.4" height="1.4" fill="#20e020" stroke="none" stroke-width="0" rx="0"/><rect x="16" y="7.5" width="1.4" height="1.4" fill="#ff2020" stroke="none" stroke-width="0" rx="0"/><rect x="16" y="10.5" width="1.4" height="1.4" fill="#20e020" stroke="none" stroke-width="0" rx="0"/><rect x="16" y="13" width="1.4" height="1.4" fill="#ff2020" stroke="none" stroke-width="0" rx="0"/></svg>
<svg style="left:294.4px;top:63.5px" width="22" height="20"><defs><linearGradient id="rg" x1="0" x2="1"><stop offset="0" stop-color="#28b8f0"/><stop offset=".45" stop-color="#9098e0"/><stop offset="1" stop-color="#f04088"/></linearGradient></defs><circle cx="9.5" cy="10" r="9.2" fill="url(#rg)" stroke="#dfe4f0" stroke-width="1"/><circle cx="9.5" cy="10.5" r="6" fill="#eceef4" stroke="none" stroke-width="0"/><circle cx="9.5" cy="11" r="4.6" fill="#8e8e8e" stroke="#6a6a6a" stroke-width="0.8"/><circle cx="9.5" cy="11" r="1.8" fill="#d0d0d0" stroke="none" stroke-width="0"/><path d="M9.500 2v6.500" stroke="#6a6a6a" stroke-width="2" fill="none" /><path d="M5.500 19h8" stroke="#f0f0f0" stroke-width="2.2" fill="none" /></svg>
<div class="r" style="left:322.5px;top:60.5px;width:1px;height:24px;background:#bcc1d0;"></div>
<svg style="left:331px;top:63.5px" width="22" height="20"><defs><linearGradient id="hg" x1="0" x2="1"><stop offset="0" stop-color="#fff"/><stop offset="1" stop-color="#f6e050"/></linearGradient></defs><path d="M4 1.500h11.500a3 3 0 0 1 3 3v4a3 3 0 0 1-3 3h-6.500l-5.500 4.500 2-4.500h-1.500a3 3 0 0 1-3-3v-4a3 3 0 0 1 3-3z" stroke="#000" stroke-width="1.6" fill="url(#hg)" /><text x="6.3" y="10.8" font-family="Liberation Sans" font-size="11" fill="#e02040" font-weight="bold" >?</text></svg>
<svg style="left:360px;top:63.5px" width="22" height="20"><rect x="1" y="1" width="7" height="9" fill="#e6e6e6" stroke="#a8a8a8" stroke-width="1.2" rx="0"/><rect x="3" y="3" width="7" height="9" fill="#f0f0f0" stroke="#a8a8a8" stroke-width="1.2" rx="0"/><circle cx="12.5" cy="10" r="5.5" fill="#f0f0f0" stroke="#a8a8a8" stroke-width="1.3"/><path d="M10.500 9v1M14.500 9v1M10.500 12c1.200 1.200 2.800 1.200 4 0M5 13l4 4.500M16 14.500l2.500 3" stroke="#a8a8a8" stroke-width="1.2" fill="none" /></svg>
<svg style="left:387px;top:63.5px" width="22" height="20"><rect x="0" y="-1" width="18.8" height="18.8" fill="#1f3f8e" stroke="none" stroke-width="0" rx="0"/><text x="1" y="14.5" font-family="Liberation Sans" font-size="10.5" fill="#f4f6ff" font-weight="bold" >s</text><text x="6.8" y="14.5" font-family="Liberation Sans" font-size="10.5" fill="#5a7cc8" font-weight="bold" >so</text></svg>
<svg style="left:428.7px;top:63.5px" width="22" height="20"><path d="M3.500 7c3-5.500 12-5 13.500 1c.8 3.500-1.500 5-3.500 5" stroke="#a8a8a8" stroke-width="1.3" fill="none" /><path d="M1 3.500v6h6z" stroke="none" stroke-width="0" fill="#a0a0a0" /><path d="M.5 15h11" stroke="#8e8e8e" stroke-width="2.2" fill="none" /><path d="M12.500 15h6.500" stroke="#8e8e8e" stroke-width="2.2" fill="none" stroke-dasharray="1.500 1"/></svg>
<svg style="left:457px;top:63.5px" width="22" height="20"><path d="M16 7c-3-5.500-12-5-13.500 1c-.8 3.500 1.500 5 3.500 5" stroke="#a8a8a8" stroke-width="1.3" fill="none" /><path d="M18.500 3.500v6h-6z" stroke="none" stroke-width="0" fill="#a0a0a0" /><path d="M8 15h11" stroke="#8e8e8e" stroke-width="2.2" fill="none" /><path d="M.5 15h6.500" stroke="#8e8e8e" stroke-width="2.2" fill="none" stroke-dasharray="1.500 1"/></svg>
<svg style="left:487px;top:63.5px" width="22" height="20"><path d="M3.500 .5l4.500 11M9 .5l-4.500 11" stroke="#a8a8a8" stroke-width="1.4" fill="none" /><circle cx="3.3" cy="14.5" r="2.6" fill="none" stroke="#a8a8a8" stroke-width="1.3"/><circle cx="9.3" cy="14.5" r="2.6" fill="none" stroke="#a8a8a8" stroke-width="1.3"/></svg>
<svg style="left:511px;top:63.5px" width="22" height="20"><path d="M1 .8h6.500l2.500 2.500v8.700h-9z" stroke="#a8a8a8" stroke-width="1.3" fill="#eee" /><path d="M3 4h3M3 6.500h5M3 9h5" stroke="#a8a8a8" stroke-width="1" fill="none" /><path d="M9 5.800h6.500l2.500 2.500v8.700h-9z" stroke="#a8a8a8" stroke-width="1.3" fill="#f4f4f4" /><path d="M11 9h3M11 11.500h5M11 14h5" stroke="#a8a8a8" stroke-width="1" fill="none" /></svg>
<svg style="left:539px;top:63.5px" width="22" height="20"><rect x="0.8" y="2.5" width="15" height="14" fill="#a4a4a4" stroke="#909090" stroke-width="1.2" rx="1.5"/><path d="M5 3c0-3.500 6.500-3.500 6.500 0z" stroke="#909090" stroke-width="1.2" fill="#c4c4c4" /><path d="M8.500 8.500h7l2.500 2.500v6.500h-9.500z" stroke="#a8a8a8" stroke-width="1.2" fill="#f2f2f2" /><path d="M10.500 12h4M10.500 14.500h5.500" stroke="#a8a8a8" stroke-width="1" fill="none" /></svg>
<svg style="left:567px;top:63.5px" width="22" height="20"><path d="M1.500 1.500c4 3 9 9 14.500 15" stroke="#8c0a0a" stroke-width="3.2" fill="none" stroke-linecap="round"/><path d="M16.500 1.500c-5 3-10 9-13 14" stroke="#8c0a0a" stroke-width="2.6" fill="none" stroke-linecap="round"/></svg>
<div class="r" style="left:594.9px;top:60.5px;width:1px;height:24px;background:#bcc1d0;"></div>
<svg style="left:603px;top:63.5px" width="22" height="20"><rect x="1" y="7" width="4" height="4" fill="#fff" stroke="#000" stroke-width="1.7" rx="0"/><rect x="12.5" y="1.5" width="6" height="4" fill="#fff" stroke="#000" stroke-width="1.7" rx="1"/><rect x="12.5" y="12" width="6" height="4" fill="#fff" stroke="#000" stroke-width="1.7" rx="1"/><path d="M6.500 8h3.500v-2.500l3.500 3.500-3.500 3.500v-2.500h-3.500z" stroke="none" stroke-width="0" fill="#ff20e8" /></svg>
<svg style="left:631px;top:63.5px" width="22" height="20"><rect x="1" y="7" width="4" height="4" fill="#eee" stroke="#a8a8a8" stroke-width="1.5" rx="0"/><rect x="12.5" y="1.5" width="6" height="4" fill="#eee" stroke="#a8a8a8" stroke-width="1.5" rx="1"/><path d="M6.500 8h3.500v-2.500l3.500 3.500-3.500 3.500v-2.500h-3.500z" stroke="none" stroke-width="0" fill="#c0c0c0" /></svg>
<svg style="left:658.7px;top:63.5px" width="22" height="20"><rect x="0.8" y="0.8" width="6.5" height="4" fill="#fff" stroke="#000" stroke-width="1.6" rx="1"/><rect x="0.8" y="6.8" width="6.5" height="4" fill="#fff" stroke="#000" stroke-width="1.6" rx="1"/><rect x="0.8" y="12.8" width="6.5" height="4" fill="#fff" stroke="#000" stroke-width="1.6" rx="1"/><path d="M6.500 3l10.500 12M16 2.500l-9.500 11.500" stroke="#8c0a0a" stroke-width="1.8" fill="none" /></svg>
<svg style="left:686px;top:63.5px" width="22" height="20"><rect x="5.5" y="0.8" width="8" height="4" fill="#fff" stroke="#000" stroke-width="1.6" rx="1"/><path d="M7 7.500h5l-2.500 3.500z" stroke="none" stroke-width="0" fill="#ff20e8" /><path d="M8.500 6h2v2h-2z" stroke="none" stroke-width="0" fill="#ff20e8" /><rect x="1" y="13" width="4" height="4" fill="#fff" stroke="#000" stroke-width="1.6" rx="0"/><rect x="14.5" y="13" width="4" height="4" fill="#fff" stroke="#000" stroke-width="1.6" rx="0"/></svg>
<svg style="left:713.7px;top:63.5px" width="22" height="20"><rect x="1" y="0.8" width="4" height="4" fill="#fff" stroke="#000" stroke-width="1.6" rx="0"/><rect x="14.5" y="0.8" width="4" height="4" fill="#fff" stroke="#000" stroke-width="1.6" rx="0"/><path d="M7.500 6h5" stroke="#000" stroke-width="1.4" fill="none" /><path d="M4.500 6.500l10 10.500M14 5.500l-9.500 11" stroke="#8c0a0a" stroke-width="1.8" fill="none" /></svg>
<svg style="left:756px;top:63.5px" width="22" height="20"><g transform="translate(0,1.5) scale(1.0,1.22)"><path d="M2.500 0h4v2.500l2.500 4.500v6.500h-8.500v-6.500l2-4.500z" stroke="none" stroke-width="0" fill="#000" /><path d="M12.500 0h4v2.500l2 4.500v6.500h-8.500v-6.500l2.500-4.500z" stroke="none" stroke-width="0" fill="#000" /><rect x="8" y="5" width="3" height="3.5" fill="#000" stroke="none" stroke-width="0" rx="0"/><rect x="3.5" y="1" width="1.5" height="1.5" fill="#fff" stroke="none" stroke-width="0" rx="0"/><rect x="13.5" y="1" width="1.5" height="1.5" fill="#fff" stroke="none" stroke-width="0" rx="0"/><rect x="5" y="6" width="1.2" height="3" fill="#fff" stroke="none" stroke-width="0" rx="0"/><rect x="14.5" y="6" width="1.2" height="3" fill="#fff" stroke="none" stroke-width="0" rx="0"/><rect x="2" y="10.5" width="1.2" height="1.5" fill="#fff" stroke="none" stroke-width="0" rx="0"/><rect x="11.5" y="10.5" width="1.2" height="1.5" fill="#fff" stroke="none" stroke-width="0" rx="0"/></g><text x="0" y="18" font-family="Liberation Sans" font-size="13" fill="#f00000" font-weight="bold" stroke="#f00000" stroke-width="1.1">D</text></svg>
<svg style="left:783.7px;top:63.5px" width="22" height="20"><g transform="translate(0,1.5) scale(1.0,1.22)"><path d="M2.500 0h4v2.500l2.500 4.500v6.500h-8.500v-6.500l2-4.500z" stroke="none" stroke-width="0" fill="#000" /><path d="M12.500 0h4v2.500l2 4.500v6.500h-8.500v-6.500l2.500-4.500z" stroke="none" stroke-width="0" fill="#000" /><rect x="8" y="5" width="3" height="3.5" fill="#000" stroke="none" stroke-width="0" rx="0"/><rect x="3.5" y="1" width="1.5" height="1.5" fill="#fff" stroke="none" stroke-width="0" rx="0"/><rect x="13.5" y="1" width="1.5" height="1.5" fill="#fff" stroke="none" stroke-width="0" rx="0"/><rect x="5" y="6" width="1.2" height="3" fill="#fff" stroke="none" stroke-width="0" rx="0"/><rect x="14.5" y="6" width="1.2" height="3" fill="#fff" stroke="none" stroke-width="0" rx="0"/><rect x="2" y="10.5" width="1.2" height="1.5" fill="#fff" stroke="none" stroke-width="0" rx="0"/><rect x="11.5" y="10.5" width="1.2" height="1.5" fill="#fff" stroke="none" stroke-width="0" rx="0"/></g></svg>
<svg style="left:811px;top:63.5px" width="22" height="20"><text x="-0.5" y="7.5" font-family="Liberation Sans" font-size="11" fill="#a018a8"  >a</text><text x="13" y="7.5" font-family="Liberation Sans" font-size="11" fill="#a018a8"  >0</text><path d="M6.500 4h3.500v-2l3 2.800-3 2.800v-2h-3.500z" stroke="none" stroke-width="0" fill="#000" /><g transform="translate(5.5,7) scale(0.68,0.8296)"><path d="M2.500 0h4v2.500l2.500 4.500v6.500h-8.500v-6.500l2-4.500z" stroke="none" stroke-width="0" fill="#000" /><path d="M12.500 0h4v2.500l2 4.500v6.500h-8.500v-6.500l2.500-4.500z" stroke="none" stroke-width="0" fill="#000" /><rect x="8" y="5" width="3" height="3.5" fill="#000" stroke="none" stroke-width="0" rx="0"/><rect x="3.5" y="1" width="1.5" height="1.5" fill="#fff" stroke="none" stroke-width="0" rx="0"/><rect x="13.5" y="1" width="1.5" height="1.5" fill="#fff" stroke="none" stroke-width="0" rx="0"/><rect x="5" y="6" width="1.2" height="3" fill="#fff" stroke="none" stroke-width="0" rx="0"/><rect x="14.5" y="6" width="1.2" height="3" fill="#fff" stroke="none" stroke-width="0" rx="0"/><rect x="2" y="10.5" width="1.2" height="1.5" fill="#fff" stroke="none" stroke-width="0" rx="0"/><rect x="11.5" y="10.5" width="1.2" height="1.5" fill="#fff" stroke="none" stroke-width="0" rx="0"/></g><text x="0" y="18" font-family="Liberation Sans" font-size="12" fill="#f00000" font-weight="bold" stroke="#f00000" stroke-width="1.1">D</text></svg>
<svg style="left:838.7px;top:63.5px" width="22" height="20"><text x="-0.5" y="7.5" font-family="Liberation Sans" font-size="11" fill="#a018a8"  >a</text><text x="13" y="7.5" font-family="Liberation Sans" font-size="11" fill="#a018a8"  >0</text><path d="M6.500 4h3.500v-2l3 2.800-3 2.800v-2h-3.500z" stroke="none" stroke-width="0" fill="#000" /><g transform="translate(3.5,7) scale(0.68,0.8296)"><path d="M2.500 0h4v2.500l2.500 4.500v6.500h-8.500v-6.500l2-4.500z" stroke="none" stroke-width="0" fill="#000" /><path d="M12.500 0h4v2.500l2 4.500v6.500h-8.500v-6.500l2.500-4.500z" stroke="none" stroke-width="0" fill="#000" /><rect x="8" y="5" width="3" height="3.5" fill="#000" stroke="none" stroke-width="0" rx="0"/><rect x="3.5" y="1" width="1.5" height="1.5" fill="#fff" stroke="none" stroke-width="0" rx="0"/><rect x="13.5" y="1" width="1.5" height="1.5" fill="#fff" stroke="none" stroke-width="0" rx="0"/><rect x="5" y="6" width="1.2" height="3" fill="#fff" stroke="none" stroke-width="0" rx="0"/><rect x="14.5" y="6" width="1.2" height="3" fill="#fff" stroke="none" stroke-width="0" rx="0"/><rect x="2" y="10.5" width="1.2" height="1.5" fill="#fff" stroke="none" stroke-width="0" rx="0"/><rect x="11.5" y="10.5" width="1.2" height="1.5" fill="#fff" stroke="none" stroke-width="0" rx="0"/></g></svg>
<svg style="left:867px;top:63.5px" width="22" height="20"><g transform="translate(1,6) scale(0.78,0.9516)"><path d="M2.500 0h4v2.500l2.500 4.500v6.500h-8.500v-6.500l2-4.500z" stroke="none" stroke-width="0" fill="#a4a4a4" /><path d="M12.500 0h4v2.500l2 4.500v6.500h-8.500v-6.500l2.500-4.500z" stroke="none" stroke-width="0" fill="#a4a4a4" /><rect x="8" y="5" width="3" height="3.5" fill="#a4a4a4" stroke="none" stroke-width="0" rx="0"/><rect x="3.5" y="1" width="1.5" height="1.5" fill="#eee" stroke="none" stroke-width="0" rx="0"/><rect x="13.5" y="1" width="1.5" height="1.5" fill="#eee" stroke="none" stroke-width="0" rx="0"/><rect x="5" y="6" width="1.2" height="3" fill="#eee" stroke="none" stroke-width="0" rx="0"/><rect x="14.5" y="6" width="1.2" height="3" fill="#eee" stroke="none" stroke-width="0" rx="0"/><rect x="2" y="10.5" width="1.2" height="1.5" fill="#eee" stroke="none" stroke-width="0" rx="0"/><rect x="11.5" y="10.5" width="1.2" height="1.5" fill="#eee" stroke="none" stroke-width="0" rx="0"/></g><path d="M4 5c1.500-4 8-4 9.500-.5" stroke="#a8a8a8" stroke-width="1.2" fill="none" /><path d="M15.500 1v5h-5z" stroke="none" stroke-width="0" fill="#c8c8c8" /></svg>
<svg style="left:893.7px;top:63.5px" width="22" height="20"><text x="9.5" y="7" font-family="Liberation Sans" font-size="10" fill="#000"  >10</text><text x="9.5" y="17.5" font-family="Liberation Sans" font-size="10" fill="#000"  >11</text><path d="M0 13.800h6v-2.300l3.300 3-3.300 3v-2.300h-6z" stroke="none" stroke-width="0" fill="#1010a0" /></svg>
<svg style="left:924.5px;top:63.5px" width="22" height="20"><path d="M12.500 9.300h-10M7 4.300l-5 5 5 5" stroke="#109890" stroke-width="2.6" fill="none" transform="translate(.3,.8)"/><path d="M12.500 9.300h-10M7.500 4l-5.500 5.300 5.500 5.300" stroke="#000" stroke-width="2.5" fill="none" /></svg>
<svg style="left:952.5px;top:63.5px" width="22" height="20"><path d="M.5 9.300h10M6 4l5.500 5.300-5.500 5.300" stroke="#9a9a9a" stroke-width="2.5" fill="none" /></svg>
<svg style="left:16px;top:94.8px" width="22" height="20"><rect x="4.5" y="5" width="10" height="9" fill="#e6e6e6" stroke="#a8a8a8" stroke-width="1.8" rx="1.5"/><path d="M8 7.500v4M10.500 7.500v4M13 7.500v4" stroke="#a8a8a8" stroke-width="1.2" fill="none" /><path d="M1 4l3-3M18 4l-3-3M1 15l3 3M18 15l-3 3" stroke="#a8a8a8" stroke-width="1.2" fill="none" /></svg>
<svg style="left:43.7px;top:94.8px" width="22" height="20"><path d="M4 4c0-3 4-3 4 0v1.500h-4zM2.500 6.500h7" stroke="#a8a8a8" stroke-width="1.3" fill="#c8c8c8" /><path d="M9 2h5v4" stroke="#a8a8a8" stroke-width="1.3" fill="none" /><path d="M11.500 6h5l-2.500 3z" stroke="none" stroke-width="0" fill="#c8c8c8" /><rect x="5.5" y="10" width="13" height="7.5" fill="#e6e6e6" stroke="#a8a8a8" stroke-width="1.6" rx="1.5"/><path d="M7.500 14h3M12.500 12v4M15.500 12v4" stroke="#a8a8a8" stroke-width="1.5" fill="none" /></svg>
<div class="r" style="left:72.5px;top:92px;width:1px;height:24px;background:#bcc1d0;"></div>
<svg style="left:81px;top:94.8px" width="22" height="20"><circle cx="9.5" cy="9.5" r="8.5" fill="#ececec" stroke="#a8a8a8" stroke-width="1.4"/><path d="M7 5l6.500 4.500-6.500 4.500z" stroke="none" stroke-width="0" fill="#b8b8b8" /></svg>
<svg style="left:108.7px;top:94.8px" width="22" height="20"><circle cx="9.5" cy="9.5" r="8.5" fill="#ececec" stroke="#a8a8a8" stroke-width="1.4"/><rect x="6.3" y="6.3" width="6.4" height="6.4" fill="#b4b4b4" stroke="none" stroke-width="0" rx="0"/></svg>
<svg style="left:136px;top:94.8px" width="22" height="20"><circle cx="9.5" cy="9.5" r="8.5" fill="#ececec" stroke="#a8a8a8" stroke-width="1.4"/><path d="M5.500 5.500l8 8M13.500 5.500l-8 8" stroke="#c0c0c0" stroke-width="1.8" fill="none" /></svg>
<div class="r" style="left:164.9px;top:92px;width:1px;height:24px;background:#bcc1d0;"></div>
<svg style="left:173.7px;top:94.8px" width="22" height="20"><rect x="1" y="7" width="17" height="10" fill="#e6e6e6" stroke="#a8a8a8" stroke-width="1.5" rx="0"/><rect x="4" y="0.8" width="10" height="11" fill="#f6f6f6" stroke="#a8a8a8" stroke-width="1.4" rx="0"/><path d="M9 3.500v1M8 6h1.500v3.500M7.500 9.500h3.500" stroke="#a8a8a8" stroke-width="1.3" fill="none" /><path d="M4 14.500h2M8 14.500h2M12 14.500h2" stroke="#a8a8a8" stroke-width="1.2" fill="none" /></svg>
<svg style="left:201px;top:94.8px" width="22" height="20"><rect x="1" y="0.8" width="16" height="11" fill="#e6e6e6" stroke="#a8a8a8" stroke-width="1.6" rx="0"/><path d="M4 3v6M6.500 3v6M11 3h1M14 3h1" stroke="#a8a8a8" stroke-width="1.3" fill="none" /><circle cx="14" cy="12.5" r="4.8" fill="#f4f4f4" stroke="#a8a8a8" stroke-width="1.3"/><path d="M14 12.500l1.500-2.500" stroke="#a8a8a8" stroke-width="1.3" fill="none" /></svg>
<div class="r" style="left:230.1px;top:92px;width:1px;height:24px;background:#bcc1d0;"></div>
<svg style="left:238.7px;top:94.8px" width="22" height="20"><path d="M5 6.500h6l3 3v5l-3 3h-6l-3-3v-5z" stroke="#a8a8a8" stroke-width="1.4" fill="#e6e6e6" /><path d="M6 9v6l5-3z" stroke="none" stroke-width="0" fill="#c8c8c8" /><path d="M10 8l7-6.500" stroke="#a8a8a8" stroke-width="3.5" fill="none" stroke-linecap="round"/><path d="M10.500 7.500l6-5.500" stroke="#f0f0f0" stroke-width="1.5" fill="none" stroke-linecap="round"/></svg>
<svg style="left:266px;top:94.8px" width="22" height="20"><path d="M4 1h5l2.500 2.500v4l-2.500 2.500h-5l-2.500-2.500v-4z" stroke="#a8a8a8" stroke-width="1.3" fill="#e6e6e6" /><path d="M5 3.500v5l4-2.500z" stroke="none" stroke-width="0" fill="#c8c8c8" /><path d="M12 2.500h3.500v4" stroke="#a8a8a8" stroke-width="1.2" fill="none" /><path d="M13.500 6h4l-2 2.500z" stroke="none" stroke-width="0" fill="#c8c8c8" /><rect x="5.5" y="9.5" width="13" height="7.5" fill="#e6e6e6" stroke="#a8a8a8" stroke-width="1.6" rx="1.5"/><path d="M7.500 13.500h3M12.500 11.500v4M15.500 11.500v4" stroke="#a8a8a8" stroke-width="1.5" fill="none" /></svg>
<svg style="left:293.7px;top:94.8px" width="22" height="20"><path d="M4.500 6.500h6l3 3v5l-3 3h-6l-3-3v-5z" stroke="#a8a8a8" stroke-width="1.4" fill="#e6e6e6" /><path d="M6 9v6l5-3z" stroke="none" stroke-width="0" fill="#c8c8c8" /><path d="M8 1l10 12M18 1l-9 10" stroke="#a8a8a8" stroke-width="1.3" fill="none" /></svg>
<div class="r" style="left:322.5px;top:92px;width:1px;height:24px;background:#bcc1d0;"></div>
<svg style="left:332px;top:94.8px" width="22" height="20"><rect x="1.5" y="1" width="14" height="16" fill="#e6e6e6" stroke="#a8a8a8" stroke-width="1.6" rx="1"/><path d="M4 4h4M4 7h4M4 10h4M4 13h4" stroke="#a8a8a8" stroke-width="1" fill="none" /><path d="M17.500 8h-5v-2.500l-4.500 4 4.500 4v-2.500h5z" stroke="none" stroke-width="0" fill="#b4b4b4" /></svg>
<svg style="left:358.7px;top:94.8px" width="22" height="20"><rect x="1" y="1" width="17" height="15" fill="#e6e6e6" stroke="#a8a8a8" stroke-width="1.4" rx="0"/><path d="M1 4h17" stroke="#a8a8a8" stroke-width="2" fill="none" /><rect x="2.5" y="5.5" width="5" height="3.5" fill="#f4f4f4" stroke="#a8a8a8" stroke-width="1.2" rx="0"/><rect x="10.5" y="5.5" width="5" height="3.5" fill="#f4f4f4" stroke="#a8a8a8" stroke-width="1.2" rx="0"/><rect x="2.5" y="11" width="4" height="3.5" fill="#f4f4f4" stroke="#a8a8a8" stroke-width="1.2" rx="0"/><path d="M7 13c1-3 3-3 4-1 1-2 3-2 4 0 3 0 3 4.500 0 4.500h-6c-3 0-4-2-2-3.500z" stroke="#a8a8a8" stroke-width="1.2" fill="#f0f0f0" /></svg>
<svg style="left:387px;top:94.8px" width="22" height="20"><rect x="1" y="7" width="17" height="10" fill="#e6e6e6" stroke="#a8a8a8" stroke-width="1.5" rx="0"/><rect x="4.5" y="0.8" width="10" height="13" fill="#f6f6f6" stroke="#a8a8a8" stroke-width="1.4" rx="0"/><circle cx="9.5" cy="6" r="3" fill="none" stroke="#a8a8a8" stroke-width="1.2"/><path d="M6 3.500l2 2.500 2.500-2" stroke="#a8a8a8" stroke-width="1.1" fill="none" /><path d="M3 14l3-2 3 2M12 11.500v5M15 11.500v5" stroke="#a8a8a8" stroke-width="1.3" fill="none" /></svg>
<svg style="left:429px;top:94.8px" width="22" height="20"><rect x="4.5" y="1" width="11" height="9" fill="#f0f0f0" stroke="#a8a8a8" stroke-width="1.5" rx="0"/><path d="M8.500 3.500v4M11 3.500v4" stroke="#a8a8a8" stroke-width="1.3" fill="none" /><path d="M2.500 11h15l1.500 4.500h-18.500z" stroke="#a8a8a8" stroke-width="1.4" fill="#e6e6e6" /></svg>
<svg style="left:457px;top:94.8px" width="22" height="20"><rect x="3.5" y="1" width="11" height="9" fill="#f0f0f0" stroke="#a8a8a8" stroke-width="1.5" rx="0"/><path d="M7.500 3l4.500 3-4.500 3z" stroke="none" stroke-width="0" fill="#b8b8b8" /><path d="M1.500 11h15l1 4.500h-17z" stroke="#a8a8a8" stroke-width="1.4" fill="#e6e6e6" /></svg>
<svg style="left:485px;top:94.8px" width="22" height="20"><rect x="3.5" y="1" width="11" height="9" fill="#f4b8ec" stroke="#000" stroke-width="1.6" rx="1"/><path d="M7.500 3v3h3v-3M9 6v3" stroke=" #c010c0" stroke-width="1.3" fill="none" /><path d="M1 11.500h17l.5 4.500h-18z" stroke="#000" stroke-width="1.3" fill="#222" /><rect x="1.5" y="11.5" width="3" height="4" fill="#f48cc0" stroke="none" stroke-width="0" rx="0"/><circle cx="7.5" cy="14.5" r="2.6" fill="#58d8f4" stroke="#000" stroke-width="1.2"/><circle cx="14.5" cy="14.5" r="2.6" fill="#58d8f4" stroke="#000" stroke-width="1.2"/><path d="M10 14c.8-.8 1.500-.8 2.300 0" stroke="#000" stroke-width="1.2" fill="none" /></svg>
<svg style="left:511px;top:94.8px" width="22" height="20"><path d="M1 4.500l3-3.500h11v11.500l-3 3.500h-11z" stroke="#a8a8a8" stroke-width="1.4" fill="#e6e6e6" /><path d="M1 4.500h11v11.500M12 4.500l3-3.500" stroke="#a8a8a8" stroke-width="1.2" fill="none" /><path d="M9 7h5v-2.500l4.500 4-4.500 4v-2.500h-5z" stroke="none" stroke-width="0" fill="#c0c0c0" /></svg>
<svg style="left:538.7px;top:94.8px" width="22" height="20"><path d="M1 4l2.500-3h14.500v13l-2.500 3h-14.500z" stroke="#a8a8a8" stroke-width="1.5" fill="#e6e6e6" /><path d="M1 4h14.500v13M15.500 4l2.500-3M8.500 1.500v15.500" stroke="#a8a8a8" stroke-width="1.3" fill="none" /><rect x="3" y="8" width="3.5" height="6" fill="#f6f6f6" stroke="#a8a8a8" stroke-width="1.2" rx="0"/><path d="M11 6h3M11 9h3M11 12h3" stroke="#a8a8a8" stroke-width="1" fill="none" /></svg>
<svg style="left:566px;top:94.8px" width="22" height="20"><rect x="1" y="0.8" width="17.5" height="16.5" fill="#f2f2f2" stroke="#a8a8a8" stroke-width="1.4" rx="0"/><rect x="4" y="5.5" width="11.5" height="7" fill="#f8f8f8" stroke="#8c8c8c" stroke-width="1.7" rx="1"/><path d="M6.500 3.500h2.500v2h-2.500zM10.500 3.500h2.500v2h-2.500zM6.500 12.500h2.500v2h-2.500zM10.500 12.500h2.500v2h-2.500z" stroke="none" stroke-width="0" fill="#8c8c8c" /></svg>
<svg style="left:593.7px;top:94.8px" width="22" height="20"><path d="M4 3.500l2.500-2.500h8.500v13l-2.500 2.500h-8.500z" stroke="#a8a8a8" stroke-width="1.5" fill="#e6e6e6" /><path d="M4 3.500h8.500v13M12.500 3.500l2.500-2.500" stroke="#a8a8a8" stroke-width="1.2" fill="none" /><rect x="6.5" y="9" width="4" height="5.5" fill="#f2f2f2" stroke="#a8a8a8" stroke-width="1.4" rx="0"/><path d="M0 15.500l3 2 3-2M13 17.500l3-.5 3.500-3" stroke="#a8a8a8" stroke-width="1" fill="none" /></svg>
<svg style="left:621px;top:94.8px" width="22" height="20"><rect x="2" y="0.5" width="17" height="15" fill="#f8f8f8" stroke="none" stroke-width="0" rx="0"/><path d="M4.500 1v15M8.500 1v15M12.500 1v15M16.500 1v15" stroke="#a8a8a8" stroke-width="1.3" fill="none" /><path d="M3 9.500h3v3h-3zM7 6h3v3h-3zM11 4h3v3h-3zM15 8h3v3h-3z" stroke="none" stroke-width="0" fill="#c8c8c8" /><path d="M1 16.500h18" stroke="#a8a8a8" stroke-width="1.4" fill="none" /><path d="M1 1v15" stroke="#a8a8a8" stroke-width="1.2" fill="none" stroke-dasharray="1 1"/></svg>
<svg style="left:650px;top:94.8px" width="22" height="20"><rect x="0.8" y="1" width="17.5" height="16" fill="#f6f6f6" stroke="#a8a8a8" stroke-width="1.3" rx="0"/><rect x="4" y="3" width="3" height="12" fill="#e6e6e6" stroke="#a8a8a8" stroke-width="1.2" rx="0"/><rect x="11.5" y="3" width="3" height="12" fill="#e6e6e6" stroke="#a8a8a8" stroke-width="1.2" rx="0"/><path d="M2.500 10h6v7h-6zM10 8h6v9h-6z" stroke="none" stroke-width="0" fill="#b8b8b8" /></svg>
<svg style="left:677.5px;top:94.8px" width="22" height="20"><rect x="0" y="0" width="9" height="8" fill="#a8a8a8" stroke="none" stroke-width="0" rx="0"/><rect x="9" y="0" width="9" height="8" fill="#f0f0f0" stroke="none" stroke-width="0" rx="0"/><rect x="0" y="8" width="9" height="9.5" fill="#c2c2c2" stroke="none" stroke-width="0" rx="0"/><rect x="9" y="8" width="9" height="9.5" fill="#c4c4c4" stroke="none" stroke-width="0" rx="0"/></svg>
<svg style="left:703.7px;top:94.8px" width="22" height="20"><rect x="1" y="3" width="15.5" height="14" fill="#e6e6e6" stroke="#8c8c8c" stroke-width="1.8" rx="2"/><path d="M3 13h11M3 15h11" stroke="#a8a8a8" stroke-width="1" fill="none" /><path d="M4 8l2 2.500 4-5" stroke="#c8c8c8" stroke-width="2" fill="none" /><path d="M9.500 10l7-8" stroke="#a8a8a8" stroke-width="3.8" fill="none" stroke-linecap="round"/><path d="M10.500 9l6-7" stroke="#f2f2f2" stroke-width="1.6" fill="none" stroke-linecap="round"/></svg>
<svg style="left:731px;top:94.8px" width="22" height="20"><rect x="3.5" y="0.8" width="11.5" height="8.5" fill="#f2f2f2" stroke="#a8a8a8" stroke-width="1.5" rx="1"/><path d="M5.500 6l2-3 2 3 2-3 2 3" stroke="#a8a8a8" stroke-width="1" fill="none" /><rect x="1" y="10.5" width="17.5" height="5.5" fill="#e6e6e6" stroke="#a8a8a8" stroke-width="1.5" rx="1"/><path d="M4 13.500h11" stroke="#a8a8a8" stroke-width="1.5" fill="none" /></svg>
<svg style="left:773px;top:94.8px" width="22" height="20"><path d="M4 4h-3v11h3" stroke="#8c8c8c" stroke-width="1.7" fill="none" /><path d="M10 4h3v11h-3" stroke="#8c8c8c" stroke-width="1.7" fill="none" /><path d="M9 1.500h9v14.500h-9" stroke="#a8a8a8" stroke-width="1.2" fill="none" /><path d="M15.500 7h5l-2.500 3z" stroke="none" stroke-width="0" fill="#c8c8c8" /></svg>
<svg style="left:800.6px;top:94.8px" width="22" height="20"><path d="M3.5 5h-3v11h3" stroke="#8c8c8c" stroke-width="1.7" fill="none" /><path d="M9.5 5h3v11h-3" stroke="#8c8c8c" stroke-width="1.7" fill="none" /><path d="M.5 1.500h17v7" stroke="#bcbcbc" stroke-width="1.3" fill="none" /><path d="M15 7.500h5l-2.500 3z" stroke="none" stroke-width="0" fill="#c8c8c8" /></svg>
<svg style="left:828.7px;top:94.8px" width="22" height="20"><path d="M3.5 6h-3v11h3" stroke="#8c8c8c" stroke-width="1.7" fill="none" /><path d="M9 6h3v11h-3" stroke="#8c8c8c" stroke-width="1.7" fill="none" /><path d="M0 2h5.500v3.500" stroke="#bcbcbc" stroke-width="1.3" fill="none" /><path d="M3.500 4h4.500l-2.250 2.500z" stroke="none" stroke-width="0" fill="#c8c8c8" /></svg>
<svg style="left:855.6px;top:94.8px" width="22" height="20"><path d="M3.5 5h-3v11h3" stroke="#8c8c8c" stroke-width="1.7" fill="none" /><path d="M9.5 5h3v11h-3" stroke="#8c8c8c" stroke-width="1.7" fill="none" /><path d="M6.500 1.500h10.500v7" stroke="#bcbcbc" stroke-width="1.3" fill="none" /><path d="M14.500 8h5l-2.500 3z" stroke="none" stroke-width="0" fill="#c8c8c8" /></svg>
<svg style="left:881px;top:94.8px" width="22" height="20"><path d="M9.5 4h-3v11h3" stroke="#8c8c8c" stroke-width="1.7" fill="none" /><path d="M15.5 4h3v11h-3" stroke="#8c8c8c" stroke-width="1.7" fill="none" /><path d="M0 9.500h3.500" stroke="#c4c4c4" stroke-width="1.3" fill="none" /><path d="M2.500 7l3 2.500-3 2.500z" stroke="none" stroke-width="0" fill="#c4c4c4" /></svg>
<div class="r" style="left:912.5px;top:92px;width:1px;height:24px;background:#bcc1d0;"></div>
<svg style="left:920px;top:94.8px" width="22" height="20"><path d="M9.5 4h-3v11h3" stroke="#8c8c8c" stroke-width="1.7" fill="none" /><path d="M16 4h3v11h-3" stroke="#8c8c8c" stroke-width="1.7" fill="none" /><circle cx="2" cy="5" r="1.8" fill="none" stroke="#c8c8c8" stroke-width="1.2"/><circle cx="2" cy="8.5" r="1.8" fill="none" stroke="#c8c8c8" stroke-width="1.2"/><path d="M0 14h3" stroke="#c4c4c4" stroke-width="1.3" fill="none" /><path d="M2.500 11.500l3 2.500-3 2.500z" stroke="none" stroke-width="0" fill="#c4c4c4" /></svg>
<svg style="left:949.5px;top:94.8px" width="22" height="20"><circle cx="1.5" cy="7" r="1.5" fill="none" stroke="#c8c8c8" stroke-width="1.2"/><circle cx="1.5" cy="10.5" r="1.5" fill="none" stroke="#c8c8c8" stroke-width="1.2"/><rect x="5.5" y="1.5" width="10.5" height="15" fill="#f4f4f4" stroke="#8c8c8c" stroke-width="1.8" rx="1.5"/><path d="M8 5h6M8 8h6M8 11h6M8 14h6" stroke="#a8a8a8" stroke-width="1.2" fill="none" /></svg>
<svg style="left:977px;top:94.8px" width="22" height="20"><rect x="1" y="1" width="9.5" height="7.5" fill="#f2f2f2" stroke="#a8a8a8" stroke-width="1.5" rx="1.5"/><path d="M3 3.500h5.500M3 6h5.500" stroke="#a8a8a8" stroke-width="1" fill="none" /><path d="M5.500 8.500v3" stroke="#a8a8a8" stroke-width="1.3" fill="none" /><path d="M7.5 10h-3v5.5h3" stroke="#8c8c8c" stroke-width="1.7" fill="none" /><path d="M14.5 4h3v11.5h-3" stroke="#8c8c8c" stroke-width="1.7" fill="none" /></svg>
<div class="r" style="left:1015px;top:91.5px;width:27px;height:26px;background:#fdf1c1;border:1px solid #f0cf7e;box-sizing:border-box;"></div>
<svg style="left:1020.5px;top:95.5px" width="16" height="14"><path d="M1 1h6.500l-2.300 2.300 6.800 6.800-2.200 2.200-6.800-6.800-2 2z" stroke="#000" stroke-width="1.3" fill="#f4ecc0" /><path d="M4 4l6.500 6.500" stroke="#000" stroke-width="1" fill="none" stroke-dasharray="1 1"/></svg>
<span class="t" style="left:1019.40px;top:104.63px;font-size:13.2px;line-height:13.2px;color:#000;transform:scaleX(0.8862);transform-origin:0 0;">Esc</span>
<span class="t" style="left:1049.40px;top:104.63px;font-size:13.2px;line-height:13.2px;color:#9c9c9c;transform:scaleX(0.7531);transform-origin:0 0;">F3</span>
<svg style="left:1049px;top:94.5px" width="22" height="14"><rect x="1" y="1" width="10" height="4.5" fill="none" stroke="#9a9a9a" stroke-width="1.4" rx="0"/><path d="M6 5.500v5M3 8.500h6" stroke="#9a9a9a" stroke-width="1.3" fill="none" /></svg>
<span class="t" style="left:1077.00px;top:104.63px;font-size:13.2px;line-height:13.2px;color:#9c9c9c;transform:scaleX(0.8050);transform-origin:0 0;">F4</span>
<svg style="left:1074.5px;top:94.5px" width="22" height="14"><rect x="1.5" y="0.8" width="15.5" height="8.5" fill="none" stroke="#9a9a9a" stroke-width="1.5" rx="0"/><path d="M10.500 1v8M0 5h1.500" stroke="#9a9a9a" stroke-width="1.3" fill="none" /><text x="3.5" y="8" font-family="Liberation Sans" font-size="7.5" fill="#9a9a9a" font-weight="bold" >N</text></svg>
<span class="t" style="left:1104.00px;top:104.63px;font-size:13.2px;line-height:13.2px;color:#9c9c9c;transform:scaleX(0.8440);transform-origin:0 0;">F5</span>
<svg style="left:1104px;top:94.5px" width="22" height="14"><rect x="1" y="0.8" width="10" height="4.5" fill="#d0d0d0" stroke="#9a9a9a" stroke-width="1.4" rx="0"/><path d="M4.500 1v4M7.500 1v4M6 5.500v5M3 8.500h6" stroke="#9a9a9a" stroke-width="1.3" fill="none" /></svg>
<span class="t" style="left:1132.00px;top:104.63px;font-size:13.2px;line-height:13.2px;color:#9c9c9c;transform:scaleX(0.8245);transform-origin:0 0;">F6</span>
<svg style="left:1131px;top:94.5px" width="22" height="14"><path d="M1.500 10v-5.500h8" stroke="#9a9a9a" stroke-width="1.5" fill="none" /><path d="M13.500 1.500v6l-5-3z" stroke="none" stroke-width="0" fill="#9a9a9a" /></svg>
<span class="t" style="left:1159.00px;top:104.63px;font-size:13.2px;line-height:13.2px;color:#9c9c9c;transform:scaleX(0.8440);transform-origin:0 0;">F7</span>
<svg style="left:1159px;top:94.5px" width="22" height="14"><path d="M1.500 1.500v5.500h8" stroke="#9a9a9a" stroke-width="1.5" fill="none" /><path d="M9 3.500l5 3.500-5 3.500z" stroke="none" stroke-width="0" fill="#9a9a9a" /></svg>
<span class="t" style="left:1187.00px;top:104.63px;font-size:13.2px;line-height:13.2px;color:#9c9c9c;transform:scaleX(0.8115);transform-origin:0 0;">F8</span>
<svg style="left:1183.5px;top:94.5px" width="22" height="14"><rect x="1" y="3" width="9" height="5" fill="none" stroke="#c4c4c4" stroke-width="1.3" rx="1"/><rect x="5" y="1" width="11" height="9" fill="none" stroke="#c4c4c4" stroke-width="1.2" rx="0"/><rect x="11" y="3.5" width="7" height="4" fill="none" stroke="#9a9a9a" stroke-width="1.5" rx="1"/><path d="M14.500 1v9" stroke="#9a9a9a" stroke-width="1.3" fill="none" /></svg>
<span class="t" style="left:1214.00px;top:104.63px;font-size:13.2px;line-height:13.2px;color:#9c9c9c;transform:scaleX(0.8764);transform-origin:0 0;">F9</span>
<svg style="left:1210.5px;top:94.5px" width="22" height="14"><rect x="11" y="3" width="8" height="5" fill="none" stroke="#c4c4c4" stroke-width="1.3" rx="1"/><rect x="4" y="1" width="11" height="9" fill="none" stroke="#c4c4c4" stroke-width="1.2" rx="0"/><rect x="1" y="3.5" width="7" height="4" fill="none" stroke="#9a9a9a" stroke-width="1.5" rx="1"/><path d="M4.500 1v9" stroke="#9a9a9a" stroke-width="1.3" fill="none" /></svg>
<div class="r" style="left:12.5px;top:122.5px;width:27.5px;height:26px;background:#fdf1c1;border:1px solid #f0cf7e;box-sizing:border-box;"></div>
<svg style="left:19px;top:126.5px" width="16" height="14"><path d="M1 1h6.500l-2.300 2.300 6.800 6.800-2.200 2.200-6.800-6.800-2 2z" stroke="#000" stroke-width="1.3" fill="#f4ecc0" /><path d="M4 4l6.500 6.500" stroke="#000" stroke-width="1" fill="none" stroke-dasharray="1 1"/></svg>
<span class="t" style="left:17.00px;top:136.13px;font-size:13.2px;line-height:13.2px;color:#000;transform:scaleX(0.8635);transform-origin:0 0;">Esc</span>
<span class="t" style="left:46.25px;top:136.13px;font-size:13.2px;line-height:13.2px;color:#000;transform:scaleX(0.8927);transform-origin:0 0;">F3</span>
<span class="t" style="left:73.70px;top:136.13px;font-size:13.2px;line-height:13.2px;color:#000;transform:scaleX(0.8959);transform-origin:0 0;">F4</span>
<span class="t" style="left:98.70px;top:136.13px;font-size:13.2px;line-height:13.2px;color:#000;transform:scaleX(0.8544);transform-origin:0 0;">sF1</span>
<span class="t" style="left:126.00px;top:136.13px;font-size:13.2px;line-height:13.2px;color:#000;transform:scaleX(0.8908);transform-origin:0 0;">sF2</span>
<span class="t" style="left:156.00px;top:136.13px;font-size:13.2px;line-height:13.2px;color:#9c9c9c;transform:scaleX(0.8297);transform-origin:0 0;">aR</span>
<span class="t" style="left:183.70px;top:136.13px;font-size:13.2px;line-height:13.2px;color:#9c9c9c;transform:scaleX(0.7985);transform-origin:0 0;">aF</span>
<span class="t" style="left:211.00px;top:136.13px;font-size:13.2px;line-height:13.2px;color:#000;transform:scaleX(0.9089);transform-origin:0 0;">F5</span>
<span class="t" style="left:239.00px;top:136.13px;font-size:13.2px;line-height:13.2px;color:#000;transform:scaleX(0.9089);transform-origin:0 0;">F6</span>
<span class="t" style="left:263.75px;top:136.13px;font-size:13.2px;line-height:13.2px;color:#000;transform:scaleX(0.9203);transform-origin:0 0;">sF8</span>
<span class="t" style="left:291.25px;top:136.13px;font-size:13.2px;line-height:13.2px;color:#000;transform:scaleX(0.9090);transform-origin:0 0;">sF9</span>
<span class="t" style="left:321.25px;top:136.13px;font-size:13.2px;line-height:13.2px;color:#000;transform:scaleX(0.8927);transform-origin:0 0;">F9</span>
<span class="t" style="left:346.50px;top:136.13px;font-size:13.2px;line-height:13.2px;color:#000;transform:scaleX(0.8500);transform-origin:0 0;">F11</span>
<span class="t" style="left:373.75px;top:136.13px;font-size:13.2px;line-height:13.2px;color:#000;transform:scaleX(0.9203);transform-origin:0 0;">sF3</span>
<span class="t" style="left:401.00px;top:136.13px;font-size:13.2px;line-height:13.2px;color:#000;transform:scaleX(0.9317);transform-origin:0 0;">sF4</span>
<span class="t" style="left:428.70px;top:136.13px;font-size:13.2px;line-height:13.2px;color:#000;transform:scaleX(0.9226);transform-origin:0 0;">sF5</span>
<span class="t" style="left:456.00px;top:136.13px;font-size:13.2px;line-height:13.2px;color:#000;transform:scaleX(0.9317);transform-origin:0 0;">sF6</span>
<span class="t" style="left:483.70px;top:136.13px;font-size:13.2px;line-height:13.2px;color:#000;transform:scaleX(0.8926);transform-origin:0 0;">F10</span>
<span class="t" style="left:511.50px;top:136.13px;font-size:13.2px;line-height:13.2px;color:#9c9c9c;transform:scaleX(0.8408);transform-origin:0 0;">sF7</span>
<span class="t" style="left:542.00px;top:136.13px;font-size:13.2px;line-height:13.2px;color:#000;transform:scaleX(0.9325);transform-origin:0 0;">c3</span>
<span class="t" style="left:569.50px;top:136.13px;font-size:13.2px;line-height:13.2px;color:#000;transform:scaleX(0.9684);transform-origin:0 0;">c4</span>
<span class="t" style="left:597.00px;top:136.13px;font-size:13.2px;line-height:13.2px;color:#000;transform:scaleX(0.9684);transform-origin:0 0;">c5</span>
<span class="t" style="left:624.50px;top:136.13px;font-size:13.2px;line-height:13.2px;color:#000;transform:scaleX(0.9684);transform-origin:0 0;">c6</span>
<svg style="left:0;top:0" width="660" height="152"><path d="M43.7 131.7h4.500M63.7 131.7h-4.500M48.0 127.19999999999999v9M59.400000000000006 127.19999999999999v9" stroke="#222" stroke-width="1.6" fill="none" /><path d="M71.2 131.7h4.500M91.2 131.7h-4.500M75.5 127.19999999999999v9M86.9 127.19999999999999v9" stroke="#222" stroke-width="1.6" fill="none" /><path d="M77.7 135.89999999999998L84.7 127.49999999999999" stroke="#222" stroke-width="1.4" fill="none" /><path d="M98.7 131.7h4.500M118.7 131.7h-4.500M103.0 127.19999999999999v9M114.4 127.19999999999999v9" stroke="#222" stroke-width="1.6" fill="none" /><text x="108.7" y="135.7" text-anchor="middle" font-family="Liberation Sans" font-size="10.5" font-weight="bold" fill="#222">P</text><path d="M126.19999999999999 131.7h4.500M146.2 131.7h-4.500M130.5 127.19999999999999v9M141.89999999999998 127.19999999999999v9" stroke="#222" stroke-width="1.6" fill="none" /><text x="136.2" y="135.7" text-anchor="middle" font-family="Liberation Sans" font-size="10.5" font-weight="bold" fill="#222">N</text><path d="M153.7 135.7h5.500v-8h8.500v8h5.500" stroke="#9a9a9a" stroke-width="1.4" fill="none" /><path d="M156.7 131.7l2.500-2.500 2.500 2.500" stroke="#9a9a9a" stroke-width="1.1" fill="none" /><path d="M181.2 135.7h5.500v-8h8.500v8h5.500" stroke="#9a9a9a" stroke-width="1.4" fill="none" /><path d="M192.7 130.7l2.500 2.500 2.500-2.500" stroke="#9a9a9a" stroke-width="1.1" fill="none" /><path d="M210.0 131.7h17.500" stroke="#222" stroke-width="2" fill="none" /><path d="M246.7 127.19999999999999v9" stroke="#222" stroke-width="2" fill="none" /><path d="M265.0 131.7h15" stroke="#222" stroke-width="2" fill="none" /><path d="M274.7 127.39999999999999l5 4.300-5 4.300M277.7 127.39999999999999l5 4.300-5 4.300" stroke="#222" stroke-width="1.1" fill="none" /><path d="M293.9 131.7h14.500" stroke="#222" stroke-width="1.8" fill="none" /><path d="M301.2 127.19999999999999v9" stroke="#222" stroke-width="1.8" fill="none" /><path d="M297.2 127.69999999999999l8 8M305.2 127.69999999999999l-8 8" stroke="#222" stroke-width="1.1" fill="none" stroke-dasharray="2 2.500"/><path d="M318.7 131.7h3M338.7 131.7h-3" stroke="#222" stroke-width="1.6" fill="none" /><text x="323.09999999999997" y="135.5" text-anchor="middle" font-family="Liberation Sans" font-size="11.500" font-weight="bold" fill="#222">(</text><text x="334.3" y="135.5" text-anchor="middle" font-family="Liberation Sans" font-size="11.500" font-weight="bold" fill="#222">)</text><path d="M346.2 131.7h3M366.2 131.7h-3" stroke="#222" stroke-width="1.6" fill="none" /><text x="350.59999999999997" y="135.5" text-anchor="middle" font-family="Liberation Sans" font-size="11.500" font-weight="bold" fill="#222">(</text><text x="361.8" y="135.5" text-anchor="middle" font-family="Liberation Sans" font-size="11.500" font-weight="bold" fill="#222">)</text><path d="M353.7 135.7L358.7 127.69999999999999" stroke="#222" stroke-width="1.6" fill="none" /><path d="M373.7 131.7h3M393.7 131.7h-3" stroke="#222" stroke-width="1.6" fill="none" /><text x="378.09999999999997" y="135.5" text-anchor="middle" font-family="Liberation Sans" font-size="11.500" font-weight="bold" fill="#222">(</text><text x="389.3" y="135.5" text-anchor="middle" font-family="Liberation Sans" font-size="11.500" font-weight="bold" fill="#222">)</text><text x="383.7" y="135.7" text-anchor="middle" font-family="Liberation Sans" font-size="11" font-weight="bold" fill="#222">S</text><path d="M401.2 131.7h3M421.2 131.7h-3" stroke="#222" stroke-width="1.6" fill="none" /><text x="405.59999999999997" y="135.5" text-anchor="middle" font-family="Liberation Sans" font-size="11.500" font-weight="bold" fill="#222">(</text><text x="416.8" y="135.5" text-anchor="middle" font-family="Liberation Sans" font-size="11.500" font-weight="bold" fill="#222">)</text><text x="411.2" y="135.7" text-anchor="middle" font-family="Liberation Sans" font-size="11" font-weight="bold" fill="#222">R</text><path d="M428.7 131.7h3M448.7 131.7h-3" stroke="#222" stroke-width="1.6" fill="none" /><text x="433.09999999999997" y="135.5" text-anchor="middle" font-family="Liberation Sans" font-size="11.500" font-weight="bold" fill="#222">(</text><text x="444.3" y="135.5" text-anchor="middle" font-family="Liberation Sans" font-size="11.500" font-weight="bold" fill="#222">)</text><text x="438.7" y="135.7" text-anchor="middle" font-family="Liberation Sans" font-size="11" font-weight="bold" fill="#222">P</text><path d="M456.2 131.7h3M476.2 131.7h-3" stroke="#222" stroke-width="1.6" fill="none" /><text x="460.59999999999997" y="135.5" text-anchor="middle" font-family="Liberation Sans" font-size="11.500" font-weight="bold" fill="#222">(</text><text x="471.8" y="135.5" text-anchor="middle" font-family="Liberation Sans" font-size="11.500" font-weight="bold" fill="#222">)</text><text x="466.2" y="135.7" text-anchor="middle" font-family="Liberation Sans" font-size="11" font-weight="bold" fill="#222">N</text><path d="M483.7 131.7h3M503.7 131.7h-3" stroke="#222" stroke-width="1.6" fill="none" /><text x="488.09999999999997" y="135.5" text-anchor="middle" font-family="Liberation Sans" font-size="11.500" font-weight="bold" fill="#222">{</text><text x="499.3" y="135.5" text-anchor="middle" font-family="Liberation Sans" font-size="11.500" font-weight="bold" fill="#222">}</text><text x="493.7" y="135.7" text-anchor="middle" font-family="Liberation Sans" font-size="11" font-weight="bold" fill="#222">F</text><path d="M511.20000000000005 131.7h2.500M531.2 131.7h-2.500" stroke="#9a9a9a" stroke-width="1.3" fill="none" /><rect x="513.7" y="127.89999999999999" width="15" height="7.600" fill="none" stroke="#9a9a9a" stroke-width="1.400"/><path d="M539.7 126.69999999999999v5h2.500M542.2 126.69999999999999v10" stroke="#222" stroke-width="1.6" fill="none" /><path d="M557.7 126.69999999999999v5h-2.500M555.2 126.69999999999999v10" stroke="#222" stroke-width="1.6" fill="none" /><path d="M567.2 126.69999999999999v5h2.500M569.7 126.69999999999999v10" stroke="#222" stroke-width="1.6" fill="none" /><path d="M585.2 126.69999999999999v5h-2.500M582.7 126.69999999999999v10" stroke="#222" stroke-width="1.6" fill="none" /><path d="M571.7 136.2L580.7 128.7" stroke="#222" stroke-width="1.4" fill="none" /><path d="M594.7 126.69999999999999v5h2.500M597.2 126.69999999999999v10" stroke="#222" stroke-width="1.6" fill="none" /><path d="M612.7 126.69999999999999v5h-2.500M610.2 126.69999999999999v10" stroke="#222" stroke-width="1.6" fill="none" /><text x="603.7" y="135.7" text-anchor="middle" font-family="Liberation Sans" font-size="10.5" font-weight="bold" fill="#222">P</text><path d="M622.2 126.69999999999999v5h2.500M624.7 126.69999999999999v10" stroke="#222" stroke-width="1.6" fill="none" /><path d="M640.2 126.69999999999999v5h-2.500M637.7 126.69999999999999v10" stroke="#222" stroke-width="1.6" fill="none" /><text x="631.2" y="135.7" text-anchor="middle" font-family="Liberation Sans" font-size="10.5" font-weight="bold" fill="#222">N</text></svg>
<div class="r" style="left:687.5px;top:122.5px;width:27.5px;height:26px;background:#fdf1c1;border:1px solid #f0cf7e;box-sizing:border-box;"></div>
<div class="r" style="left:714.5px;top:122.5px;width:28px;height:26px;background:#fdf1c1;border:1px solid #f0cf7e;box-sizing:border-box;"></div>
<div class="r" style="left:797.5px;top:122.5px;width:27.5px;height:26px;background:#fdf1c1;border:1px solid #f0cf7e;box-sizing:border-box;"></div>
<div class="r" style="left:982.5px;top:122.5px;width:27.5px;height:26px;background:#fdf1c1;border:1px solid #f0cf7e;box-sizing:border-box;"></div>
<svg style="left:665px;top:125.5px" width="22" height="20"><rect x="0.8" y="3.5" width="16.5" height="13.5" fill="#fcd8f4" stroke="#000" stroke-width="1.8" rx="1"/><path d="M5 3.500l1.500-2.500h3.500l1.500 2.500z" stroke="#000" stroke-width="1" fill="#7030a0" /><path d="M4 7h10M4 9.500h10M4 12h10M4 14.500h10" stroke="#444" stroke-width="1.2" fill="none" /></svg>
<svg style="left:692.5px;top:125.5px" width="22" height="20"><path d="M1.500 4.500l2-3.500h5l2 3.500" stroke="#a8a8a8" stroke-width="1.2" fill="#c8c8c8" /><rect x="1" y="4.5" width="16.5" height="12.5" fill="#f2f2f2" stroke="#a8a8a8" stroke-width="1.6" rx="1"/><path d="M3.500 8.500h3M12 8.500h3M3.500 13h3M12 13h3M7.500 7v3M10.500 7v3M7.500 11.500v3M10.500 11.500v3" stroke="#c4c4c4" stroke-width="1.2" fill="none" /></svg>
<svg style="left:718.7px;top:125.5px" width="22" height="20"><rect x="0.8" y="0.8" width="17.5" height="16.5" fill="#a8ccf4" stroke="#4a5868" stroke-width="1.8" rx="0"/><path d="M3 7.500h4l1 1.500h6v6h-11z" stroke="#000" stroke-width="1.4" fill="#f8e060" /><rect x="4.5" y="5" width="5" height="2.5" fill="#8a8a10" stroke="#000" stroke-width="1" rx="0"/><path d="M12 3l1.500 4.500 3-3-2 4 3 1-4 .5" stroke=" #ff7010" stroke-width="1.5" fill="none" /></svg>
<svg style="left:746px;top:125.5px" width="22" height="20"><rect x="0.8" y="0.8" width="17.5" height="16.5" fill="#a8ccf4" stroke="#4a5868" stroke-width="1.8" rx="0"/><path d="M3 8l6.500-4.500 6.500 4.500v7h-13z" stroke="#000" stroke-width="1.3" fill="#a8e0b0" /><rect x="6" y="3.5" width="7" height="5" fill="#fff" stroke="#666" stroke-width="1" rx="1"/><path d="M3 15l6.500-5 6.500 5" stroke="#000" stroke-width="1.2" fill="none" /></svg>
<svg style="left:773.7px;top:125.5px" width="22" height="20"><rect x="0.8" y="0.8" width="17.5" height="16.5" fill="#a8ccf4" stroke="#4a5868" stroke-width="1.8" rx="0"/><circle cx="6" cy="11" r="3.3" fill="#f8c0b0" stroke="#000" stroke-width="1.3"/><circle cx="13.5" cy="11" r="3.3" fill="#f8c0b0" stroke="#000" stroke-width="1.3"/><path d="M3 9l3-4.500M16.500 9l-3-4.500M9 10.500c.5-.8 1-.8 1.500 0" stroke="#000" stroke-width="1.2" fill="none" /></svg>
<svg style="left:801px;top:125.5px" width="22" height="20"><rect x="0.8" y="0.8" width="17.5" height="16.5" fill="#a8ccf4" stroke="#4a5868" stroke-width="1.8" rx="0"/><text x="3.5" y="15.5" font-family="Liberation Sans" font-size="15" fill="#8a3c08" font-weight="bold" stroke="#8a3c08" stroke-width=".8">F</text></svg>
<div class="r" style="left:829.9px;top:123px;width:1px;height:24px;background:#bcc1d0;"></div>
<svg style="left:838.7px;top:125.5px" width="22" height="20"><rect x="0.8" y="0.8" width="17.5" height="16.5" fill="#a8ccf4" stroke="#555" stroke-width="1.8" rx="0"/><rect x="4" y="4" width="11" height="2.5" fill="#e8c860" stroke="#000" stroke-width="1" rx="0"/><path d="M6 7v3M13 7v3" stroke="#000" stroke-width="1.2" fill="none" /><rect x="3" y="10" width="5" height="5" fill="#e03870" stroke="#000" stroke-width="1.2" rx="0"/><rect x="11" y="10" width="5" height="5" fill="#40c8e0" stroke="#000" stroke-width="1.2" rx="0"/><rect x="4.5" y="10" width="3" height="2" fill="#fff" stroke="none" stroke-width="0" rx="0"/><rect x="12.5" y="10" width="3" height="2" fill="#fff" stroke="none" stroke-width="0" rx="0"/></svg>
<svg style="left:866px;top:125.5px" width="22" height="20"><rect x="0.8" y="0.8" width="17.5" height="15.5" fill="#a8d4f8" stroke="#000" stroke-width="1.7" rx="2"/><path d="M3 3.500h13" stroke="#20a040" stroke-width="2.2" fill="none" stroke-dasharray="2 1"/><path d="M5 6.500v8M9.500 6.500v8M14 6.500v8" stroke="#3018e0" stroke-width="1.8" fill="none" /><path d="M3.500 9l1.500-2 1.500 2zM8 9l1.500-2 1.500 2zM12.500 9l1.500-2 1.500 2zM3.500 12l1.500 2 1.500-2zM8 12l1.500 2 1.500-2zM12.500 12l1.500 2 1.500-2z" stroke="none" stroke-width="0" fill="#3018e0" /></svg>
<svg style="left:893.7px;top:125.5px" width="22" height="20"><path d="M3 1.500v4M9.500 1.500v4M16 1.500v4" stroke="#30a850" stroke-width="1.3" fill="none" stroke-dasharray="1.500 1"/><path d="M2 5h5l-2.500 3.500zM7 5h5l-2.500 3.500zM13.500 5h5l-2.500 3.500z" stroke="none" stroke-width="0" fill="#28a048" /><rect x="0.8" y="8.5" width="17.5" height="8" fill="#d0f0e0" stroke="#000" stroke-width="1.5" rx="0"/><path d="M3 13.500v3M5.500 13.500v3M8 13.500v3M10.500 13.500v3M13 13.500v3M15.500 13.500v3" stroke="#000" stroke-width="1.3" fill="none" /><path d="M2 12h15" stroke="#40b890" stroke-width="1.2" fill="none" /></svg>
<div class="r" style="left:922.5px;top:123px;width:1px;height:24px;background:#bcc1d0;"></div>
<svg style="left:931px;top:125.5px" width="22" height="20"><path d="M1 1h12.500l4.500 4.500v12h-17z" stroke="#000" stroke-width="1.7" fill="#c2ecc8" /><path d="M13.500 1v4.500h4.500" stroke="#000" stroke-width="1.1" fill="#fff" /><path d="M3.500 6l5.500 8 6-8" stroke=" #f07808" stroke-width="3" fill="none" /></svg>
<svg style="left:958.7px;top:125.5px" width="22" height="20"><path d="M1 1h12.500l4.500 4.500v12h-17z" stroke="#000" stroke-width="1.7" fill="#c2ecc8" /><path d="M13.500 1v4.500h4.500" stroke="#000" stroke-width="1.1" fill="#fff" /><text x="4" y="15" font-family="Liberation Sans" font-size="13.5" fill="#1080f8" font-weight="bold" stroke="#1080f8" stroke-width="1.300">D</text></svg>
<svg style="left:986px;top:125.5px" width="22" height="20"><path d="M1 1h12.500l4.500 4.500v12h-17z" stroke="#000" stroke-width="1.7" fill="#c2ecc8" /><path d="M13.500 1v4.500h4.500" stroke="#000" stroke-width="1.1" fill="#fff" /><text x="2.5" y="14.5" font-family="Liberation Sans" font-size="13" fill="#1080f8" font-weight="bold" >D</text><path d="M10 8.500l3 6.500 3-6.500" stroke="#f07808" stroke-width="2" fill="none" /></svg>
<svg style="left:1013.7px;top:125.5px" width="22" height="20"><path d="M1 1h12.500l4.500 4.500v12h-17z" stroke="#000" stroke-width="1.7" fill="#c2ecc8" /><path d="M13.500 1v4.500h4.500" stroke="#000" stroke-width="1.1" fill="#fff" /><text x="2.5" y="14.5" font-family="Liberation Sans" font-size="13" fill="#1080f8" font-weight="bold" >D</text><text x="10" y="15.5" font-family="Liberation Sans" font-size="12" fill="#f838d8" font-weight="bold" >c</text></svg>
<svg style="left:1041px;top:125.5px" width="22" height="20"><path d="M1 1h12.500l4.500 4.500v12h-17z" stroke="#000" stroke-width="1.7" fill="#c2ecc8" /><path d="M13.500 1v4.500h4.500" stroke="#000" stroke-width="1.1" fill="#fff" /><path d="M3 4.500l3.500 9 3.500-9" stroke="#f07808" stroke-width="2.2" fill="none" /><text x="10" y="15.5" font-family="Liberation Sans" font-size="12" fill="#f838d8" font-weight="bold" >c</text></svg>
<svg style="left:1068.7px;top:125.5px" width="22" height="20"><path d="M1 1h12.500l4.500 4.500v12h-17z" stroke="#000" stroke-width="1.7" fill="#c2ecc8" /><path d="M13.500 1v4.500h4.500" stroke="#000" stroke-width="1.1" fill="#fff" /><text x="3.5" y="15.5" font-family="Liberation Sans" font-size="15" fill="#000" font-weight="bold" >A</text></svg>
<div class="r" style="left:1097.5px;top:123px;width:1px;height:24px;background:#bcc1d0;"></div>
<svg style="left:1106px;top:125.5px" width="22" height="20"><path d="M11 11l6 6" stroke="#000" stroke-width="2.6" fill="none" /><circle cx="7.5" cy="7.5" r="6.5" fill="#c8dcf8" stroke="#000" stroke-width="1.5"/><circle cx="7.5" cy="7.5" r="5" fill="#dcecfc" stroke="#8ab" stroke-width="0.8"/><path d="M4 7.500h7M7.500 4v7" stroke="#3010c8" stroke-width="2.2" fill="none" /></svg>
<svg style="left:1133.7px;top:125.5px" width="22" height="20"><path d="M11 11l6 6" stroke="#000" stroke-width="2.6" fill="none" /><circle cx="7.5" cy="7.5" r="6.5" fill="#b8ec90" stroke="#000" stroke-width="1.5"/><circle cx="7.5" cy="7.5" r="5" fill="#d4f8b0" stroke="#8b8" stroke-width="0.8"/><path d="M4 7.500h7" stroke="#18a018" stroke-width="2.2" fill="none" /></svg>
<div class="r" style="left:1162.5px;top:123px;width:1px;height:24px;background:#bcc1d0;"></div>
<svg style="left:1171px;top:125.5px" width="22" height="20"><path d="M5 9.500l-4.500 5.500" stroke="#000" stroke-width="1.8" fill="none" /><circle cx="6" cy="5" r="4.8" fill="#d0e4f8" stroke="#000" stroke-width="1.5"/><path d="M3.500 4.500l2.500-2.500 2.500 2.500-2.500 3.500z" stroke="none" stroke-width="0" fill="#4018e0" /><path d="M7 11.500h3.500M13.500 11.500h5M11 7.500v8.500M14 7.500v8.500" stroke="#f87838" stroke-width="2.2" fill="none" /></svg>
<svg style="left:1198.7px;top:125.5px" width="22" height="20"><path d="M5 9.500l-4.500 5.500" stroke="#a8a8a8" stroke-width="1.6" fill="none" /><circle cx="6" cy="5" r="4.8" fill="#ececec" stroke="#a8a8a8" stroke-width="1.4"/><path d="M3.500 5h5" stroke="#c8c8c8" stroke-width="2" fill="none" /><path d="M11 7.500v8.500M14 7.500v8.500M15 11.500h3.500" stroke="#d8d8d8" stroke-width="2.2" fill="none" /></svg>
<div class="r" style="left:1227.5px;top:123px;width:1px;height:24px;background:#bcc1d0;"></div>
<svg style="left:1236px;top:125.5px" width="22" height="20"><rect x="1" y="1" width="18" height="13.5" fill="#20e0e0" stroke="#000" stroke-width="2" rx="0"/><path d="M.5 16.500h19" stroke=" #555" stroke-width="2.6" fill="none" /><path d="M4 4.500h8M4 7.500h11M4 10.500h9" stroke="#000" stroke-width="1.4" fill="none" /><path d="M6 2v11M10 2v11M14 2v11" stroke="#10b0b8" stroke-width="0.8" fill="none" /></svg>
<svg style="left:1278.7px;top:125.5px" width="22" height="20"><rect x="3" y="6" width="14.5" height="11" fill="#b0f0e0" stroke="#000" stroke-width="1.6" rx="0"/><path d="M1 1h14v8.500h-9l-1.500 2.500-.5-2.500h-3z" stroke="#e02858" stroke-width="1.5" fill="#fff" /><path d="M3 3.500h9M3 5.500h10M3 7.500h8" stroke="#aaa" stroke-width="1" fill="none" /></svg>
<div class="r" style="left:1307.5px;top:123px;width:1px;height:24px;background:#bcc1d0;"></div>
<svg style="left:1317px;top:125.5px" width="22" height="20"><circle cx="8.5" cy="9" r="7.5" fill="#3870e8" stroke="#000" stroke-width="1.3"/><circle cx="7" cy="7" r="4.5" fill="#d8e8fc" stroke="none" stroke-width="0"/><path d="M5 9l2.500 3 5.500-6.500" stroke="#e81838" stroke-width="2.2" fill="none" /></svg>
<svg style="left:1344.5px;top:125.5px" width="22" height="20"><circle cx="8.5" cy="9" r="7.5" fill="#e83858" stroke="#000" stroke-width="1.3"/><circle cx="7" cy="7" r="4.5" fill="#f8c8d0" stroke="none" stroke-width="0"/><path d="M5 5.500l7 7.500M12 5.500l-7 7.500" stroke="#1848e8" stroke-width="2.2" fill="none" /></svg>
<svg style="left:1371px;top:125.5px" width="22" height="20"><path d="M1 8h3v7h11v-7h3v9.500h-17z" stroke="#000" stroke-width="1.3" fill="#d0a0e8" /><path d="M9.500 9c-2-2-4-2.500-6.500-2.500v7c2.500 0 4.500.5 6.500 2.500zM9.500 9c2-2 4-2.500 6.500-2.500v7c-2.500 0-4.500.5-6.500 2.500z" stroke="#000" stroke-width="1.4" fill="#b8e8f8" /><path d="M1 1l4 4M15 1l4 4" stroke="#e81848" stroke-width="1.3" fill="none" /><path d="M2.500 5h3v-3zM16.500 5h3v-3z" stroke="none" stroke-width="0" fill="#e81848" /></svg>
<svg style="left:1398.7px;top:125.5px" width="22" height="20"><path d="M1 8h3v7h11v-7h3v9.500h-17z" stroke="#a8a8a8" stroke-width="1.3" fill="#d8d8d8" /><path d="M9.500 9c-2-2-4-2.500-6.500-2.500v7c2.500 0 4.500.5 6.500 2.500zM9.500 9c2-2 4-2.500 6.500-2.500v7c-2.500 0-4.500.5-6.500 2.500z" stroke="#a8a8a8" stroke-width="1.4" fill="#f2f2f2" /><path d="M7 0l5 5M12 0l-5 5" stroke="#c8c8c8" stroke-width="1.3" fill="none" /></svg>
<svg style="left:1426px;top:125.5px" width="22" height="20"><path d="M1 8h3v7h11v-7h3v9.500h-17z" stroke="#a8a8a8" stroke-width="1.3" fill="#d8d8d8" /><path d="M9.500 9c-2-2-4-2.500-6.500-2.500v7c2.500 0 4.500.5 6.500 2.500zM9.500 9c2-2 4-2.500 6.500-2.500v7c-2.500 0-4.500.5-6.500 2.500z" stroke="#a8a8a8" stroke-width="1.4" fill="#f2f2f2" /><path d="M7 5c0-4 6-4 6-.5" stroke="#c8c8c8" stroke-width="1.3" fill="none" /><path d="M5 1.500v4h4z" stroke="none" stroke-width="0" fill="#c8c8c8" /></svg>
<svg style="left:1453.7px;top:125.5px" width="22" height="20"><path d="M1 8h3v7h11v-7h3v9.500h-17z" stroke="#a8a8a8" stroke-width="1.3" fill="#d8d8d8" /><path d="M9.500 9c-2-2-4-2.500-6.500-2.500v7c2.500 0 4.500.5 6.500 2.500zM9.500 9c2-2 4-2.500 6.500-2.500v7c-2.500 0-4.500.5-6.500 2.500z" stroke="#a8a8a8" stroke-width="1.4" fill="#f2f2f2" /><path d="M12.500 5c0-4-6-4-6-.5" stroke="#c8c8c8" stroke-width="1.3" fill="none" /><path d="M14.500 1.500v4h-4z" stroke="none" stroke-width="0" fill="#c8c8c8" /></svg>
</body></html>
